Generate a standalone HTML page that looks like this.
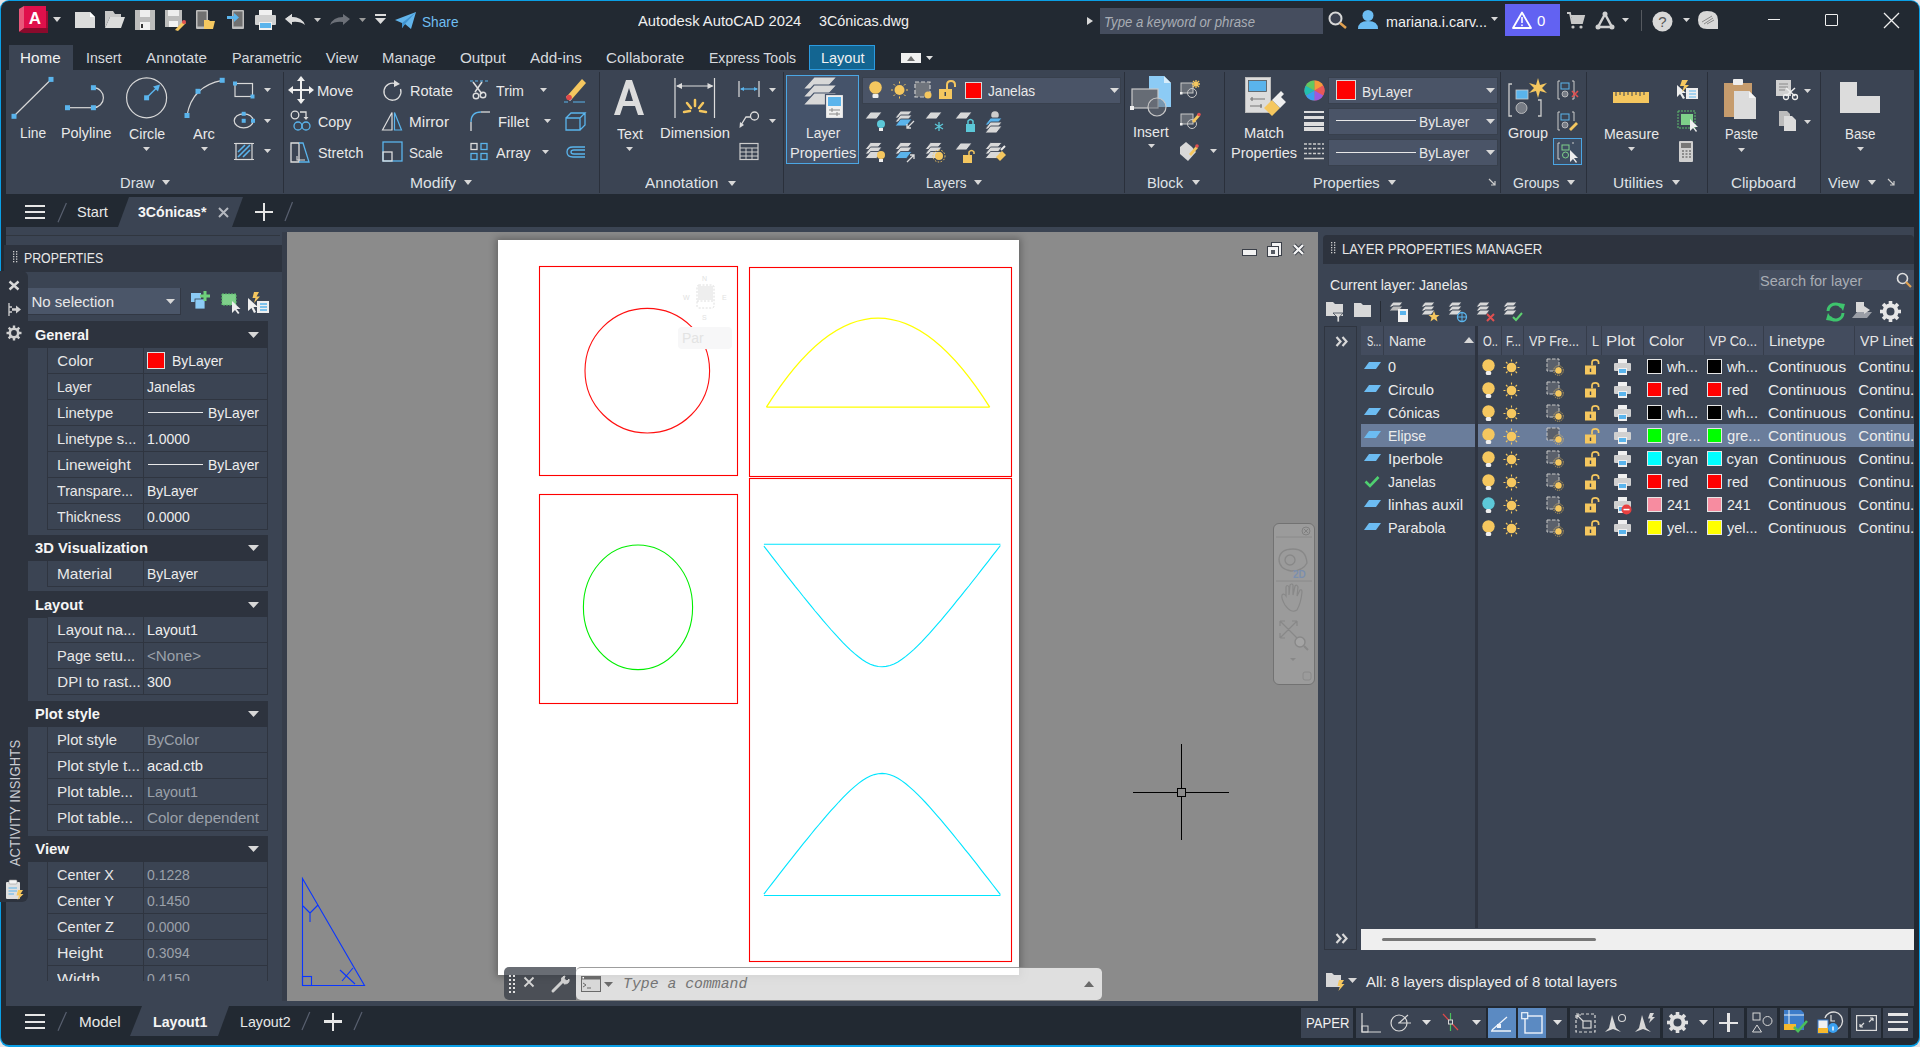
<!DOCTYPE html>
<html><head><meta charset="utf-8"><title>AutoCAD</title>
<style>
html,body{margin:0;padding:0;}
body{width:1920px;height:1047px;overflow:hidden;position:relative;background:#e8e4e6;font-family:"Liberation Sans",sans-serif;}
.a{position:absolute;box-sizing:border-box;}
.t{position:absolute;line-height:0;white-space:nowrap;font-family:"Liberation Sans",sans-serif;}
svg.a{overflow:visible;}
</style></head><body>
<div class="a" style="left:0px;top:0px;width:1920px;height:1047px;background:#0a9fe6;border-radius:9px;"></div><div class="a" style="left:1px;top:1px;width:1918px;height:1044px;background:#222932;border-radius:8px;"></div><div class="a" style="left:9px;top:45px;width:64px;height:25px;background:#3b4453;"></div><div class="a" style="left:6px;top:70px;width:1908px;height:124px;background:#3b4453;"></div><div class="a" style="left:283px;top:72px;width:1px;height:121px;background:#2a303b;"></div><div class="a" style="left:599px;top:72px;width:1px;height:121px;background:#2a303b;"></div><div class="a" style="left:783px;top:72px;width:1px;height:121px;background:#2a303b;"></div><div class="a" style="left:1124px;top:72px;width:1px;height:121px;background:#2a303b;"></div><div class="a" style="left:1224px;top:72px;width:1px;height:121px;background:#2a303b;"></div><div class="a" style="left:1500px;top:72px;width:1px;height:121px;background:#2a303b;"></div><div class="a" style="left:1586px;top:72px;width:1px;height:121px;background:#2a303b;"></div><div class="a" style="left:1707px;top:72px;width:1px;height:121px;background:#2a303b;"></div><div class="a" style="left:1820px;top:72px;width:1px;height:121px;background:#2a303b;"></div><svg class="a" style="left:110px;top:196px;" width="140" height="32" viewBox="0 0 140 32"><polygon points="8,31 19,1 133,1 122,31" fill="#3b4453"/></svg><div class="a" style="left:6px;top:227px;width:1908px;height:779px;background:#3b4453;"></div><div class="a" style="left:287px;top:232px;width:1031px;height:769px;background:#8b8b8b;"></div><svg class="a" style="left:125px;top:1005px;" width="110" height="32" viewBox="0 0 110 32"><polygon points="5,31 17,1 104,1 93,31" fill="#3b4453"/></svg><svg class="a" style="left:19px;top:6px;" width="31" height="27" viewBox="0 0 31 27"><polygon points="0,3 5,0 5,23 0,26" fill="#e9577a"/><rect x="5" y="0" width="22" height="22" fill="#e0104b"/><polygon points="5,22 27,22 29,19 29,27 5,27 0,26" fill="#8a0a2c"/><rect x="27" y="5" width="2" height="17" fill="#a30a33"/><text x="16" y="18" font-family="Liberation Sans" font-weight="bold" font-size="17" fill="#fff" text-anchor="middle">A</text></svg><svg class="a" style="left:53.0px;top:16.5px;" width="8" height="5" viewBox="0 0 8 5"><polygon points="0,0 8,0 4.0,5" fill="#d8d8d8"/></svg><svg class="a" style="left:75px;top:12px;" width="20" height="16" viewBox="0 0 20 16"><polygon points="0,0 15,0 20,5 20,16 0,16" fill="#dcdcdc"/><polygon points="15,0 15,5 20,5" fill="#fff"/></svg><svg class="a" style="left:105px;top:11px;" width="20" height="17" viewBox="0 0 20 17"><polygon points="0,0 8,0 10,3 16,3 16,6 5,6 0,17" fill="#c8c8c8"/><polygon points="5,6 20,6 16,17 0,17" fill="#dcdcdc"/></svg><svg class="a" style="left:135px;top:10px;" width="20" height="20" viewBox="0 0 20 20"><rect width="20" height="20" fill="#bdbdbd"/><rect x="5" y="0" width="10" height="7" fill="#eee"/><rect x="5" y="12" width="10" height="8" fill="#f2f2f2"/><rect x="6" y="14" width="2" height="4" fill="#333"/></svg><svg class="a" style="left:165px;top:10px;" width="20" height="20" viewBox="0 0 20 20"><rect width="17" height="17" fill="#bdbdbd"/><rect x="3" y="0" width="11" height="6" fill="#eee"/><rect x="4" y="11" width="9" height="6" fill="#f2f2f2"/><polygon points="10,20 18,11 21,13 13,21" fill="#f5c860"/><circle cx="19" cy="12" r="2" fill="#e05050"/></svg><svg class="a" style="left:196px;top:10px;" width="19" height="19" viewBox="0 0 19 19"><rect x="0" y="0" width="12" height="19" rx="1" fill="#bdbdbd"/><rect x="1.5" y="1.5" width="9" height="15" fill="#707070"/><polygon points="8,10 13,10 14,11 19,11 17,19 8,19" fill="#f5c860"/></svg><svg class="a" style="left:227px;top:10px;" width="17" height="19" viewBox="0 0 17 19"><rect x="5" y="0" width="12" height="19" rx="1" fill="#bdbdbd"/><rect x="6.5" y="1.5" width="9" height="15" fill="#707070"/><rect x="0" y="6" width="8" height="3" fill="#5ab4ec"/><polygon points="7,3 12,7.5 7,12" fill="#5ab4ec"/></svg><svg class="a" style="left:255px;top:10px;" width="21" height="20" viewBox="0 0 21 20"><rect x="4" y="0" width="13" height="6" fill="#f0f0f0"/><rect x="0" y="5" width="21" height="10" rx="1" fill="#d0d0d0"/><rect x="4" y="12" width="13" height="8" fill="#f0f0f0"/><rect x="5" y="13" width="11" height="5" fill="#5ab4ec"/></svg><svg class="a" style="left:285px;top:14px;" width="21" height="12" viewBox="0 0 21 12"><polygon points="0,5 7,0 7,3 12,3 C" fill="#ddd"/><path d="M0,5 L7,0 L7,3 Q17,3 20,11 Q15,7 7,8 L7,11 Z" fill="#dcdcdc"/></svg><svg class="a" style="left:313.5px;top:18.0px;" width="7" height="4" viewBox="0 0 7 4"><polygon points="0,0 7,0 3.5,4" fill="#c8c8c8"/></svg><svg class="a" style="left:330px;top:14px;" width="20" height="12" viewBox="0 0 20 12"><path d="M20,5 L13,0 L13,3 Q3,3 0,11 Q5,7 13,8 L13,11 Z" fill="#6c7078"/></svg><svg class="a" style="left:358.5px;top:18.0px;" width="7" height="4" viewBox="0 0 7 4"><polygon points="0,0 7,0 3.5,4" fill="#9a9a9a"/></svg><svg class="a" style="left:375px;top:14px;" width="11" height="11" viewBox="0 0 11 11"><rect x="0" y="0" width="11" height="2" fill="#dcdcdc"/><polygon points="0,4 11,4 5.5,10" fill="#dcdcdc"/></svg><svg class="a" style="left:395px;top:12px;" width="21" height="17" viewBox="0 0 21 17"><polygon points="0,8 21,0 16,17 10,12 7,16 7,11" fill="#62b5ec"/><polygon points="7,11 21,0 10,12 7,16" fill="#3f93d0"/></svg><div class="t" style="left:421.50px;top:22.00px;font-size:15px;color:#70bff2;transform:scaleX(0.9119);transform-origin:0 0;">Share</div><div class="t" style="left:638.40px;top:20.80px;font-size:15px;color:#f0f0f0;transform:scaleX(0.9841);transform-origin:0 0;">Autodesk AutoCAD 2024</div><div class="t" style="left:818.50px;top:20.80px;font-size:15px;color:#f0f0f0;transform:scaleX(0.9552);transform-origin:0 0;">3Cónicas.dwg</div><svg class="a" style="left:1087px;top:17px;" width="6" height="8" viewBox="0 0 6 8"><polygon points="0,0 6,4 0,8" fill="#d8d8d8"/></svg><div class="a" style="left:1100px;top:8px;width:223px;height:26px;background:#454d5e;"></div><div class="t" style="left:1103.50px;top:21.50px;font-size:15px;color:#a9adb5;font-style:italic;transform:scaleX(0.8764);transform-origin:0 0;">Type a keyword or phrase</div><svg class="a" style="left:1328px;top:11px;" width="20" height="18" viewBox="0 0 20 18"><circle cx="7.5" cy="7.5" r="6" fill="#3b4150" stroke="#d8d8d8" stroke-width="2"/><line x1="12" y1="12" x2="18" y2="17" stroke="#e0a050" stroke-width="2.5"/></svg><svg class="a" style="left:1358px;top:10px;" width="20" height="19" viewBox="0 0 20 19"><circle cx="10" cy="5.5" r="5.5" fill="#6cbcf2"/><path d="M0,19 Q0,11 10,11 Q20,11 20,19 Z" fill="#6cbcf2"/></svg><div class="t" style="left:1386.00px;top:22.00px;font-size:15px;color:#f0f0f0;transform:scaleX(0.9566);transform-origin:0 0;">mariana.i.carv...</div><svg class="a" style="left:1490.5px;top:17.0px;" width="7" height="4" viewBox="0 0 7 4"><polygon points="0,0 7,0 3.5,4" fill="#d8d8d8"/></svg><div class="a" style="left:1505px;top:4px;width:55px;height:32px;background:#6262f2;"></div><svg class="a" style="left:1512px;top:11px;" width="20" height="18" viewBox="0 0 20 18"><path d="M10,1.5 L19,17 L1,17 Z" fill="none" stroke="#fff" stroke-width="1.8" stroke-linejoin="round"/><rect x="9.2" y="6" width="1.6" height="6" fill="#fff"/><rect x="9.2" y="13.5" width="1.6" height="1.6" fill="#fff"/></svg><div class="t" style="left:1537.00px;top:20.50px;font-size:15px;color:#fff;">0</div><svg class="a" style="left:1567px;top:12px;" width="17" height="17" viewBox="0 0 17 17"><path d="M0,1 L3,1 L5,11 L15,11 L17,4 L4,4" fill="none" stroke="#c8c8c8" stroke-width="1.8"/><rect x="5" y="5" width="11" height="5" fill="#c8c8c8"/><circle cx="6" cy="15" r="1.6" fill="#c8c8c8"/><circle cx="14" cy="15" r="1.6" fill="#c8c8c8"/></svg><svg class="a" style="left:1595px;top:11px;" width="20" height="19" viewBox="0 0 20 19"><path d="M10,3 L17,16 L3,16 Z" fill="none" stroke="#d0d0d0" stroke-width="2.5" stroke-linejoin="round"/><circle cx="10" cy="3" r="2.5" fill="#d0d0d0"/><circle cx="3" cy="16" r="2.5" fill="#d0d0d0"/><circle cx="17" cy="16" r="2.5" fill="#d0d0d0"/></svg><svg class="a" style="left:1621.5px;top:18.0px;" width="7" height="4" viewBox="0 0 7 4"><polygon points="0,0 7,0 3.5,4" fill="#d8d8d8"/></svg><div class="a" style="left:1641px;top:10px;width:1px;height:21px;background:#55595f;"></div><svg class="a" style="left:1652px;top:11px;" width="21" height="21" viewBox="0 0 21 21"><circle cx="10.5" cy="10.5" r="10" fill="#d8d8d8"/><text x="10.5" y="16" font-family="Liberation Sans" font-size="15" fill="#555" text-anchor="middle">?</text></svg><svg class="a" style="left:1682.5px;top:18.0px;" width="7" height="4" viewBox="0 0 7 4"><polygon points="0,0 7,0 3.5,4" fill="#d8d8d8"/></svg><svg class="a" style="left:1698px;top:11px;" width="20" height="18" viewBox="0 0 20 18"><path d="M9,0 Q20,0 20,9 L20,18 L9,18 Q0,18 0,9 Q0,0 9,0 Z" fill="#d8d8d8"/><path d="M4,11 L14,5 M6,13 L15,7 M9,13 L16,9" stroke="#888" stroke-width="1"/></svg><div class="a" style="left:1768px;top:19px;width:12px;height:1px;background:#f0f0f0;"></div><div class="a" style="left:1825px;top:14px;width:13px;height:12px;border:1.3px solid #f0f0f0;border-radius:1px;"></div><svg class="a" style="left:1883px;top:12px;" width="17" height="17" viewBox="0 0 17 17"><path d="M1,1 L16,16 M16,1 L1,16" stroke="#f0f0f0" stroke-width="1.3"/></svg><div class="t" style="left:20.30px;top:58.30px;font-size:15px;color:#f2f2f2;transform:scaleX(1.0147);transform-origin:0 0;">Home</div><div class="t" style="left:86.40px;top:58.30px;font-size:15px;color:#d6d9de;transform:scaleX(0.9463);transform-origin:0 0;">Insert</div><div class="t" style="left:146.00px;top:58.30px;font-size:15px;color:#d6d9de;transform:scaleX(1.0158);transform-origin:0 0;">Annotate</div><div class="t" style="left:232.40px;top:58.30px;font-size:15px;color:#d6d9de;transform:scaleX(0.9598);transform-origin:0 0;">Parametric</div><div class="t" style="left:325.80px;top:58.30px;font-size:15px;color:#d6d9de;">View</div><div class="t" style="left:382.00px;top:58.30px;font-size:15px;color:#d6d9de;transform:scaleX(0.9925);transform-origin:0 0;">Manage</div><div class="t" style="left:460.00px;top:58.30px;font-size:15px;color:#d6d9de;transform:scaleX(1.0171);transform-origin:0 0;">Output</div><div class="t" style="left:530.00px;top:58.30px;font-size:15px;color:#d6d9de;transform:scaleX(1.0224);transform-origin:0 0;">Add-ins</div><div class="t" style="left:605.70px;top:58.30px;font-size:15px;color:#d6d9de;transform:scaleX(1.0194);transform-origin:0 0;">Collaborate</div><div class="t" style="left:708.60px;top:58.30px;font-size:15px;color:#d6d9de;transform:scaleX(0.9356);transform-origin:0 0;">Express Tools</div><div class="a" style="left:809px;top:45px;width:66px;height:25px;background:#136591;border:1px solid #2b9be0;"></div><div class="t" style="left:820.50px;top:58.30px;font-size:15px;color:#f2f2f2;transform:scaleX(0.9659);transform-origin:0 0;">Layout</div><svg class="a" style="left:901px;top:53px;" width="20" height="10" viewBox="0 0 20 10"><rect width="20" height="10" fill="#f0f0f0"/><polygon points="6,8 14,8 10,3" fill="#707070"/></svg><svg class="a" style="left:925.5px;top:56.0px;" width="7" height="4" viewBox="0 0 7 4"><polygon points="0,0 7,0 3.5,4" fill="#e0e0e0"/></svg><svg class="a" style="left:0px;top:70px;" width="290" height="100" viewBox="0 0 290 100"><line x1="14" y1="46" x2="51" y2="9.5" stroke="#d8d8d8" stroke-width="1.2"/><rect x="11.5" y="43.8" width="5" height="5" fill="#5ab4ec"/><rect x="48.5" y="6.9" width="5" height="5" fill="#5ab4ec"/><line x1="67.5" y1="37.7" x2="93.4" y2="37.7" stroke="#d8d8d8" stroke-width="1.2"/><path d="M93.4,17.7 A10,10 0 0 1 93.4,37.7" fill="none" stroke="#d8d8d8" stroke-width="1.2"/><rect x="65.0" y="35.2" width="5" height="5" fill="#5ab4ec"/><rect x="90.9" y="35.2" width="5" height="5" fill="#5ab4ec"/><rect x="90.9" y="15.2" width="5" height="5" fill="#5ab4ec"/><circle cx="146.6" cy="27.8" r="20" fill="none" stroke="#d8d8d8" stroke-width="1.2"/><line x1="146.6" y1="27.8" x2="157" y2="17.5" stroke="#5ab4ec" stroke-width="1.5"/><polygon points="160,14.5 153,16.5 158,21.5" fill="#5ab4ec"/><rect x="144.1" y="25.3" width="5" height="5" fill="#5ab4ec"/><path d="M187,45.5 Q192,16 222.2,10.3" fill="none" stroke="#d8d8d8" stroke-width="1.2"/><rect x="184.5" y="43.0" width="5" height="5" fill="#5ab4ec"/><rect x="195.5" y="18.8" width="5" height="5" fill="#5ab4ec"/><rect x="219.7" y="7.800000000000001" width="5" height="5" fill="#5ab4ec"/><rect x="235" y="13.5" width="17.5" height="13" fill="none" stroke="#d8d8d8" stroke-width="1.2"/><rect x="233.0" y="11.5" width="4" height="4" fill="#5ab4ec"/><rect x="250.5" y="24.5" width="4" height="4" fill="#5ab4ec"/><ellipse cx="243.7" cy="50.8" rx="9.5" ry="7" fill="none" stroke="#d8d8d8" stroke-width="1.2"/><rect x="241.7" y="48.8" width="4" height="4" fill="#5ab4ec"/><rect x="241.7" y="41.8" width="4" height="4" fill="#5ab4ec"/><rect x="251.0" y="48.8" width="4" height="4" fill="#5ab4ec"/><rect x="236" y="73.5" width="16" height="16" fill="none" stroke="#d8d8d8" stroke-width="1.2"/><path d="M238,87 L250,75 M238,82 L245,75 M243,87 L250,80" stroke="#5ab4ec" stroke-width="1.6"/><path d="M234,73.5 L254,73.5 M234,89.5 L254,89.5" stroke="#d8d8d8" stroke-width="1"/></svg><div class="t" style="left:19.50px;top:133.00px;font-size:15px;color:#e9e9e9;transform:scaleX(0.9203);transform-origin:0 0;">Line</div><div class="t" style="left:60.60px;top:133.00px;font-size:15px;color:#e9e9e9;transform:scaleX(0.9595);transform-origin:0 0;">Polyline</div><div class="t" style="left:129.40px;top:133.50px;font-size:15px;color:#e9e9e9;transform:scaleX(0.9443);transform-origin:0 0;">Circle</div><div class="t" style="left:193.30px;top:133.50px;font-size:15px;color:#e9e9e9;transform:scaleX(0.9733);transform-origin:0 0;">Arc</div><svg class="a" style="left:143.0px;top:146.6px;" width="7" height="4" viewBox="0 0 7 4"><polygon points="0,0 7,0 3.5,4" fill="#d8d8d8"/></svg><svg class="a" style="left:200.5px;top:146.6px;" width="7" height="4" viewBox="0 0 7 4"><polygon points="0,0 7,0 3.5,4" fill="#d8d8d8"/></svg><svg class="a" style="left:263.5px;top:87.7px;" width="7" height="4" viewBox="0 0 7 4"><polygon points="0,0 7,0 3.5,4" fill="#d8d8d8"/></svg><svg class="a" style="left:263.5px;top:118.5px;" width="7" height="4" viewBox="0 0 7 4"><polygon points="0,0 7,0 3.5,4" fill="#d8d8d8"/></svg><svg class="a" style="left:263.5px;top:149.3px;" width="7" height="4" viewBox="0 0 7 4"><polygon points="0,0 7,0 3.5,4" fill="#d8d8d8"/></svg><div class="t" style="left:119.50px;top:182.60px;font-size:15px;color:#dfe2e6;transform:scaleX(0.9828);transform-origin:0 0;">Draw</div><svg class="a" style="left:162.0px;top:180.0px;" width="8" height="5" viewBox="0 0 8 5"><polygon points="0,0 8,0 4.0,5" fill="#d8d8d8"/></svg><svg class="a" style="left:288px;top:76px;" width="300" height="90" viewBox="0 0 300 90"><path d="M13,4 L13,24 M3,14 L23,14" stroke="#eee" stroke-width="2"/><polygon points="13,0 9,5 17,5" fill="#eee"/><polygon points="13,28 9,23 17,23" fill="#eee"/><polygon points="0,14 5,10 5,18" fill="#eee"/><polygon points="26,14 21,10 21,18" fill="#eee"/><circle cx="7" cy="39" r="3.8" fill="none" stroke="#ddd" stroke-width="1.3"/><path d="M12,36 L18,36 L18,42" fill="none" stroke="#ddd" stroke-width="1.3"/><polygon points="15.5,41 20.5,41 18,44" fill="#ddd"/><circle cx="10" cy="50" r="4" fill="none" stroke="#5ab4ec" stroke-width="1.3"/><circle cx="18" cy="50" r="4" fill="none" stroke="#5ab4ec" stroke-width="1.3"/><path d="M3,67 L11,67 L11,86 L3,86 Z" fill="none" stroke="#ddd" stroke-width="1.3"/><path d="M11,67 L15,67 L21,86 L11,86" fill="none" stroke="#5ab4ec" stroke-width="1.3"/><path d="M9,80 L9,84 L17,84" fill="none" stroke="#ddd" stroke-width="1.1"/><path d="M108,8 A8.5,8.5 0 1 0 112.5,13" fill="none" stroke="#ddd" stroke-width="1.3"/><polygon points="106,4 112,8 106,11" fill="#ddd"/><polygon points="94.5,54 104,36.5 104,54" fill="none" stroke="#ddd" stroke-width="1.2"/><polygon points="106.5,36.5 106.5,54 113.5,54" fill="none" stroke="#5ab4ec" stroke-width="1.2"/><rect x="95" y="66" width="19" height="19" fill="none" stroke="#5ab4ec" stroke-width="1.3"/><rect x="95" y="76" width="9" height="9" fill="none" stroke="#ddd" stroke-width="1.3"/><path d="M182,5 L200,5" stroke="#5ab4ec" stroke-width="1.2" stroke-dasharray="3,2"/><path d="M185,6 L194,18 M194,6 L187,16" stroke="#ddd" stroke-width="1.5"/><circle cx="188" cy="20" r="2.8" fill="none" stroke="#ddd" stroke-width="1.4"/><circle cx="195" cy="19" r="2.8" fill="none" stroke="#ddd" stroke-width="1.4"/><path d="M183,55 L183,46" stroke="#ddd" stroke-width="1.3"/><path d="M183,46 Q183,36 193,36" fill="none" stroke="#5ab4ec" stroke-width="1.3"/><path d="M193,36 L202,36" stroke="#ddd" stroke-width="1.3"/><rect x="183" y="67.5" width="6" height="6" fill="none" stroke="#ddd" stroke-width="1.3"/><rect x="193" y="67.5" width="6" height="6" fill="none" stroke="#5ab4ec" stroke-width="1.3"/><rect x="183" y="77.5" width="6" height="6" fill="none" stroke="#5ab4ec" stroke-width="1.3"/><rect x="193" y="77.5" width="6" height="6" fill="none" stroke="#5ab4ec" stroke-width="1.3"/><polygon points="280,19 294,3 298,7 284,23" fill="#f5c75f"/><polygon points="280,19 284,23 282,25 278,21" fill="#f0f0f0"/><circle cx="281" cy="21.5" r="2.8" fill="#e04848"/><path d="M276,26 L280,26 M285,26 L297,26" stroke="#5ab4ec" stroke-width="1.2"/><path d="M278,42 L292,42 L292,54 L278,54 Z M278,42 L283,37 L297,37 L292,42 M297,37 L297,49 L292,54" fill="none" stroke="#5ab4ec" stroke-width="1.3"/><path d="M297,71 L285,71 Q279,71 279,76 Q279,81 285,81 L297,81 M297,74 L286,74 Q283,74 283,76 Q283,78 286,78 L297,78" fill="none" stroke="#5ab4ec" stroke-width="1.3"/></svg><div class="t" style="left:317.00px;top:90.50px;font-size:15px;color:#e9e9e9;transform:scaleX(0.9896);transform-origin:0 0;">Move</div><div class="t" style="left:318.30px;top:121.50px;font-size:15px;color:#e9e9e9;transform:scaleX(0.9538);transform-origin:0 0;">Copy</div><div class="t" style="left:318.30px;top:153.00px;font-size:15px;color:#e9e9e9;transform:scaleX(0.9554);transform-origin:0 0;">Stretch</div><div class="t" style="left:409.70px;top:90.50px;font-size:15px;color:#e9e9e9;transform:scaleX(0.9685);transform-origin:0 0;">Rotate</div><div class="t" style="left:408.70px;top:121.50px;font-size:15px;color:#e9e9e9;transform:scaleX(1.0215);transform-origin:0 0;">Mirror</div><div class="t" style="left:408.70px;top:153.00px;font-size:15px;color:#e9e9e9;transform:scaleX(0.9008);transform-origin:0 0;">Scale</div><div class="t" style="left:496.30px;top:90.50px;font-size:15px;color:#e9e9e9;transform:scaleX(0.9480);transform-origin:0 0;">Trim</div><div class="t" style="left:497.50px;top:121.50px;font-size:15px;color:#e9e9e9;transform:scaleX(0.9851);transform-origin:0 0;">Fillet</div><div class="t" style="left:496.30px;top:153.00px;font-size:15px;color:#e9e9e9;transform:scaleX(0.9627);transform-origin:0 0;">Array</div><svg class="a" style="left:539.5px;top:87.7px;" width="7" height="4" viewBox="0 0 7 4"><polygon points="0,0 7,0 3.5,4" fill="#d8d8d8"/></svg><svg class="a" style="left:543.5px;top:119.0px;" width="7" height="4" viewBox="0 0 7 4"><polygon points="0,0 7,0 3.5,4" fill="#d8d8d8"/></svg><svg class="a" style="left:541.5px;top:150.0px;" width="7" height="4" viewBox="0 0 7 4"><polygon points="0,0 7,0 3.5,4" fill="#d8d8d8"/></svg><div class="t" style="left:409.70px;top:182.90px;font-size:15px;color:#dfe2e6;transform:scaleX(1.0435);transform-origin:0 0;">Modify</div><svg class="a" style="left:464.0px;top:180.0px;" width="8" height="5" viewBox="0 0 8 5"><polygon points="0,0 8,0 4.0,5" fill="#d8d8d8"/></svg><svg class="a" style="left:610px;top:76px;" width="170" height="90" viewBox="0 0 170 90"><path d="M4,39 L16,4 L22,4 L34,39 L28,39 L25,30 L13,30 L10,39 Z M15,25 L23,25 L19,12 Z" fill="#dcdcdc" fill-rule="evenodd"/><path d="M65,2 L65,42 M104.5,2 L104.5,42" stroke="#ddd" stroke-width="1.2"/><path d="M67,10 L102.5,10" stroke="#ddd" stroke-width="1.2"/><polygon points="66,10 72,7 72,13" fill="#ddd"/><polygon points="103.5,10 97.5,7 97.5,13" fill="#ddd"/><path d="M85,24 L85,30 M77,27 L81,32 M93,27 L89,32 M74,36 L80,35 M96,36 L90,35" stroke="#f5c75f" stroke-width="2.5" stroke-linecap="round"/><path d="M129,5 L129,21 M149,5 L149,21" stroke="#ddd" stroke-width="1.2"/><path d="M131,13 L147,13" stroke="#5ab4ec" stroke-width="1.2"/><polygon points="130,13 134,11 134,15" fill="#5ab4ec"/><polygon points="148,13 144,11 144,15" fill="#5ab4ec"/><circle cx="144.5" cy="40" r="4" fill="none" stroke="#ddd" stroke-width="1.3"/><path d="M140.5,41 L136,41 L131,49" fill="none" stroke="#ddd" stroke-width="1.3"/><polygon points="129.5,52 130,46 134,49" fill="#ddd"/><rect x="130" y="67.5" width="18" height="16" fill="none" stroke="#ccc" stroke-width="1.2"/><path d="M130,72 L148,72 M130,76 L148,76 M130,80 L148,80 M136,72 L136,83.5 M142,72 L142,83.5" stroke="#ccc" stroke-width="1"/></svg><div class="t" style="left:617.20px;top:133.50px;font-size:15px;color:#e9e9e9;transform:scaleX(0.9415);transform-origin:0 0;">Text</div><svg class="a" style="left:625.8px;top:146.5px;" width="7" height="4" viewBox="0 0 7 4"><polygon points="0,0 7,0 3.5,4" fill="#d8d8d8"/></svg><div class="t" style="left:659.90px;top:133.00px;font-size:15px;color:#e9e9e9;transform:scaleX(0.9878);transform-origin:0 0;">Dimension</div><svg class="a" style="left:768.7px;top:87.9px;" width="7" height="4" viewBox="0 0 7 4"><polygon points="0,0 7,0 3.5,4" fill="#d8d8d8"/></svg><svg class="a" style="left:768.7px;top:118.5px;" width="7" height="4" viewBox="0 0 7 4"><polygon points="0,0 7,0 3.5,4" fill="#d8d8d8"/></svg><div class="t" style="left:645.30px;top:182.80px;font-size:15px;color:#dfe2e6;transform:scaleX(1.0234);transform-origin:0 0;">Annotation</div><svg class="a" style="left:728.1px;top:180.5px;" width="8" height="5" viewBox="0 0 8 5"><polygon points="0,0 8,0 4.0,5" fill="#d8d8d8"/></svg><div class="a" style="left:786px;top:75px;width:73px;height:89px;background:#45536a;border:1.3px solid #4ba6e4;"></div><svg class="a" style="left:803px;top:77px;" width="46" height="42" viewBox="0 0 46 42"><polygon points="0,12 11,0 34,0 23,12" fill="#d8d8d8" stroke="#45536a" stroke-width="1.2"/><polygon points="0,20 11,8 34,8 23,20" fill="#d8d8d8" stroke="#45536a" stroke-width="1.2"/><polygon points="0,28 11,16 34,16 23,28" fill="#d8d8d8" stroke="#45536a" stroke-width="1.2"/><rect x="22.5" y="17.5" width="18" height="24" fill="#f0f0f0" stroke="#45536a" stroke-width="1.2"/><rect x="25" y="20" width="13" height="9" fill="#5ab4ec"/><path d="M26,33 L37,33 M26,37 L37,37 M29,31 L29,35 M34,35 L34,39" stroke="#888" stroke-width="1"/></svg><div class="t" style="left:805.70px;top:133.30px;font-size:15px;color:#e9e9e9;transform:scaleX(0.9141);transform-origin:0 0;">Layer</div><div class="t" style="left:789.70px;top:152.50px;font-size:15px;color:#e9e9e9;transform:scaleX(0.9698);transform-origin:0 0;">Properties</div><div class="a" style="left:862px;top:77px;width:259px;height:27px;background:#4a5467;border:1px solid #38404d;"></div><svg class="a" style="left:869px;top:81px;" width="14" height="18" viewBox="0 0 14 18"><circle cx="6.5" cy="6.5" r="6.3" fill="#f5c75f"/><rect x="3.5" y="13" width="6" height="4" rx="1" fill="#eee"/></svg><svg class="a" style="left:890px;top:81px;" width="19" height="18" viewBox="0 0 19 18"><circle cx="9.5" cy="9" r="5" fill="#f5c75f"/><path d="M9.5,0.5 L9.5,2.5 M9.5,15.5 L9.5,17.5 M1,9 L3,9 M16,9 L18,9 M3.5,3 L5,4.5 M14,13.5 L15.5,15 M3.5,15 L5,13.5 M14,4.5 L15.5,3" stroke="#f5c75f" stroke-width="1"/></svg><svg class="a" style="left:914px;top:81px;" width="20" height="18" viewBox="0 0 20 18"><rect x="1" y="1" width="15" height="15" fill="#6f747c" stroke="#ccc" stroke-width="1.2" stroke-dasharray="4,2"/><circle cx="14" cy="14" r="3.5" fill="#f5c75f"/></svg><svg class="a" style="left:939px;top:81px;" width="18" height="18" viewBox="0 0 18 18"><rect x="0" y="8" width="13" height="10" fill="#f5c75f"/><path d="M8,8 L8,4 Q8,0 12,0 Q16,0 16,4 L16,6" fill="none" stroke="#f5c75f" stroke-width="2"/><rect x="5.5" y="11" width="1.5" height="4" fill="#3b4453"/></svg><div class="a" style="left:965px;top:82px;width:17px;height:17px;background:#ff0000;border:1px solid #d8d8d8;"></div><div class="t" style="left:988.00px;top:90.50px;font-size:15px;color:#e9e9e9;transform:scaleX(0.9110);transform-origin:0 0;">Janelas</div><svg class="a" style="left:1109.5px;top:87.7px;" width="9" height="5" viewBox="0 0 9 5"><polygon points="0,0 9,0 4.5,5" fill="#dcdcdc"/></svg><svg class="a" style="left:865px;top:111px;" width="21" height="21" viewBox="0 0 21 21"><polygon points="0,8 5.5,1 17,1 11.5,8" fill="#d8d8d8" stroke="#3b4453" stroke-width="0.9"/><circle cx="16" cy="13" r="4" fill="#5cc8d8"/><rect x="14" y="17" width="4" height="3" fill="#eee"/></svg><svg class="a" style="left:895px;top:111px;" width="20" height="21" viewBox="0 0 20 21"><polygon points="0,7 5.5,0 17,0 11.5,7" fill="#d8d8d8" stroke="#3b4453" stroke-width="0.9"/><polygon points="0,11 5.5,4 17,4 11.5,11" fill="#d8d8d8" stroke="#3b4453" stroke-width="0.9"/><polygon points="0,15 5.5,8 17,8 11.5,15" fill="#5ab4ec" stroke="#3b4453" stroke-width="0.9"/><path d="M19,10 L12,17 M12,13 L12,17 L16,17" fill="none" stroke="#ddd" stroke-width="1.3"/></svg><svg class="a" style="left:925px;top:111px;" width="20" height="21" viewBox="0 0 20 21"><polygon points="0,8 5.5,1 17,1 11.5,8" fill="#d8d8d8" stroke="#3b4453" stroke-width="0.9"/><path d="M14,11 L14,20 M10,13 L18,18 M10,18 L18,13" stroke="#5cc8d8" stroke-width="1.3"/></svg><svg class="a" style="left:955px;top:111px;" width="21" height="21" viewBox="0 0 21 21"><polygon points="0,8 5.5,1 17,1 11.5,8" fill="#d8d8d8" stroke="#3b4453" stroke-width="0.9"/><rect x="11" y="13" width="9" height="8" fill="#5cc8d8"/><path d="M13,13 L13,10 Q15.5,7 18,10 L18,13" fill="none" stroke="#5cc8d8" stroke-width="1.5"/></svg><svg class="a" style="left:985px;top:111px;" width="21" height="21" viewBox="0 0 21 21"><circle cx="10" cy="4" r="3.8" fill="#ccc"/><polygon points="0,14 5.5,7 17,7 11.5,14" fill="#5ab4ec" stroke="#3b4453" stroke-width="0.9"/><polygon points="0,18 5.5,11 17,11 11.5,18" fill="#d8d8d8" stroke="#3b4453" stroke-width="0.9"/><polygon points="0,22 5.5,15 17,15 11.5,22" fill="#d8d8d8" stroke="#3b4453" stroke-width="0.9"/></svg><svg class="a" style="left:865px;top:142px;" width="21" height="21" viewBox="0 0 21 21"><polygon points="0,7.5 5.5,0.5 17,0.5 11.5,7.5" fill="#d8d8d8" stroke="#3b4453" stroke-width="0.9"/><polygon points="0,12 5.5,5 17,5 11.5,12" fill="#d8d8d8" stroke="#3b4453" stroke-width="0.9"/><polygon points="0,16.5 5.5,9.5 17,9.5 11.5,16.5" fill="#d8d8d8" stroke="#3b4453" stroke-width="0.9"/><circle cx="16" cy="13" r="4" fill="#f5c75f"/><rect x="14" y="17" width="4" height="3" fill="#eee"/></svg><svg class="a" style="left:895px;top:142px;" width="20" height="21" viewBox="0 0 20 21"><polygon points="0,7.5 5.5,0.5 17,0.5 11.5,7.5" fill="#d8d8d8" stroke="#3b4453" stroke-width="0.9"/><polygon points="0,12 5.5,5 17,5 11.5,12" fill="#d8d8d8" stroke="#3b4453" stroke-width="0.9"/><polygon points="0,16.5 5.5,9.5 17,9.5 11.5,16.5" fill="#5ab4ec" stroke="#3b4453" stroke-width="0.9"/><path d="M12,20 L19,13 M15,13 L19,13 L19,17" fill="none" stroke="#ddd" stroke-width="1.3"/></svg><svg class="a" style="left:925px;top:142px;" width="21" height="21" viewBox="0 0 21 21"><polygon points="0,7.5 5.5,0.5 17,0.5 11.5,7.5" fill="#d8d8d8" stroke="#3b4453" stroke-width="0.9"/><polygon points="0,12 5.5,5 17,5 11.5,12" fill="#d8d8d8" stroke="#3b4453" stroke-width="0.9"/><polygon points="0,16.5 5.5,9.5 17,9.5 11.5,16.5" fill="#d8d8d8" stroke="#3b4453" stroke-width="0.9"/><circle cx="14" cy="14" r="4" fill="#f5c75f"/><circle cx="14" cy="14" r="6" fill="none" stroke="#f5c75f" stroke-width="1" stroke-dasharray="1.5,1.5"/></svg><svg class="a" style="left:955px;top:142px;" width="21" height="21" viewBox="0 0 21 21"><polygon points="0,8 5.5,1 17,1 11.5,8" fill="#d8d8d8" stroke="#3b4453" stroke-width="0.9"/><rect x="8" y="13" width="9" height="8" fill="#f5c75f"/><path d="M14,13 L14,10 Q16.5,7 19,10 L19,12" fill="none" stroke="#f5c75f" stroke-width="1.5"/></svg><svg class="a" style="left:985px;top:142px;" width="21" height="21" viewBox="0 0 21 21"><polygon points="0,7.5 5.5,0.5 17,0.5 11.5,7.5" fill="#d8d8d8" stroke="#3b4453" stroke-width="0.9"/><polygon points="0,12 5.5,5 17,5 11.5,12" fill="#d8d8d8" stroke="#3b4453" stroke-width="0.9"/><polygon points="0,16.5 5.5,9.5 17,9.5 11.5,16.5" fill="#d8d8d8" stroke="#3b4453" stroke-width="0.9"/><polygon points="11,15 17,9 21,13 15,19" fill="#f5c75f"/><path d="M16,8 L20,4" stroke="#eee" stroke-width="2"/></svg><div class="t" style="left:925.70px;top:182.50px;font-size:15px;color:#dfe2e6;transform:scaleX(0.8973);transform-origin:0 0;">Layers</div><svg class="a" style="left:974.2px;top:180.0px;" width="8" height="5" viewBox="0 0 8 5"><polygon points="0,0 8,0 4.0,5" fill="#d8d8d8"/></svg><svg class="a" style="left:1130px;top:75px;" width="44" height="44" viewBox="0 0 44 44"><polygon points="19,1 34,1 41,8 41,32 19,32" fill="#8ccbf5"/><polygon points="34,1 34,8 41,8" fill="#d6ecfa"/><rect x="2" y="14" width="26" height="19" fill="#666c75" stroke="#c8c8c8" stroke-width="1.2"/><circle cx="27" cy="32" r="9" fill="#666c75" fill-opacity="0.55" stroke="#c8c8c8" stroke-width="1.2"/><rect x="0" y="31" width="4" height="4" fill="#eee"/></svg><div class="t" style="left:1133.20px;top:132.00px;font-size:15px;color:#e9e9e9;transform:scaleX(0.9490);transform-origin:0 0;">Insert</div><svg class="a" style="left:1147.5px;top:144.2px;" width="7" height="4" viewBox="0 0 7 4"><polygon points="0,0 7,0 3.5,4" fill="#d8d8d8"/></svg><svg class="a" style="left:1180px;top:80px;" width="20" height="20" viewBox="0 0 20 20"><rect x="1" y="3" width="12" height="10" fill="#666c75" stroke="#c8c8c8" stroke-width="1"/><circle cx="12" cy="13" r="4.5" fill="none" stroke="#c8c8c8" stroke-width="1"/><rect x="0" y="12" width="2.5" height="2.5" fill="#eee"/><path d="M16,0 L16,8 M12,4 L20,4 M13,1 L19,7 M19,1 L13,7" stroke="#f5c75f" stroke-width="1.3"/></svg><svg class="a" style="left:1180px;top:111px;" width="20" height="20" viewBox="0 0 20 20"><rect x="1" y="3" width="12" height="10" fill="#666c75" stroke="#c8c8c8" stroke-width="1"/><circle cx="12" cy="13" r="4.5" fill="none" stroke="#c8c8c8" stroke-width="1"/><rect x="0" y="12" width="2.5" height="2.5" fill="#eee"/><polygon points="12,10 18,3 20,5 14,12" fill="#f5c75f"/><circle cx="19" cy="3.5" r="1.8" fill="#e05050"/></svg><svg class="a" style="left:1180px;top:142px;" width="20" height="20" viewBox="0 0 20 20"><polygon points="0,5 6,0 12,5 16,10 8,19 0,12" fill="#d8d8d8"/><polygon points="9,12 16,4 18,6 11,14" fill="#f5c75f"/><circle cx="17" cy="4" r="1.8" fill="#e05050"/></svg><svg class="a" style="left:1209.5px;top:149.3px;" width="7" height="4" viewBox="0 0 7 4"><polygon points="0,0 7,0 3.5,4" fill="#d8d8d8"/></svg><div class="t" style="left:1147.40px;top:182.80px;font-size:15px;color:#dfe2e6;transform:scaleX(0.9815);transform-origin:0 0;">Block</div><svg class="a" style="left:1192.2px;top:180.0px;" width="8" height="5" viewBox="0 0 8 5"><polygon points="0,0 8,0 4.0,5" fill="#d8d8d8"/></svg><svg class="a" style="left:1245px;top:77px;" width="42" height="44" viewBox="0 0 42 44"><rect x="0.5" y="0.5" width="25" height="35" fill="#dcdcdc" stroke="#bbb" stroke-width="1"/><rect x="3.5" y="3.5" width="18" height="11" fill="#5ab4ec" stroke="#555" stroke-width="0.8"/><path d="M5,22 L20,22 M5,29 L17,29 M7,20 L7,24 M16,27 L16,31" stroke="#777" stroke-width="1.2"/><polygon points="19,31 27,23 35,31 27,39" fill="#f5c75f"/><polygon points="27,23 33,17 36,14 39,17 36,20 41,25 35,31" fill="#eeeeee"/></svg><div class="t" style="left:1243.50px;top:132.70px;font-size:15px;color:#e9e9e9;transform:scaleX(0.9793);transform-origin:0 0;">Match</div><div class="t" style="left:1230.70px;top:152.50px;font-size:15px;color:#e9e9e9;transform:scaleX(0.9654);transform-origin:0 0;">Properties</div><svg class="a" style="left:1304px;top:80px;" width="21" height="21" viewBox="0 0 21 21"><circle cx="10.5" cy="10.5" r="10" fill="#e05a5a"/><path d="M10.5,10.5 L10.5,0.5 A10,10 0 0 1 19.2,5.5 Z" fill="#f59a3a"/><path d="M10.5,10.5 L19.2,5.5 A10,10 0 0 1 19.2,15.5 Z" fill="#e85858"/><path d="M10.5,10.5 L19.2,15.5 A10,10 0 0 1 10.5,20.5 Z" fill="#9a5ae0"/><path d="M10.5,10.5 L10.5,20.5 A10,10 0 0 1 1.8,15.5 Z" fill="#3aa0f0"/><path d="M10.5,10.5 L1.8,15.5 A10,10 0 0 1 1.8,5.5 Z" fill="#20c0b0"/><path d="M10.5,10.5 L1.8,5.5 A10,10 0 0 1 10.5,0.5 Z" fill="#60c860"/></svg><svg class="a" style="left:1304px;top:111px;" width="20" height="20" viewBox="0 0 20 20"><rect x="0" y="0" width="20" height="2" fill="#ddd"/><rect x="0" y="5" width="20" height="3" fill="#ddd"/><rect x="0" y="11" width="20" height="4" fill="#ddd"/><rect x="0" y="16" width="20" height="4" fill="#ddd"/></svg><svg class="a" style="left:1304px;top:143px;" width="20" height="17" viewBox="0 0 20 17"><path d="M0,1 L20,1 M0,5.5 L20,5.5 M0,10.5 L20,10.5" stroke="#ccc" stroke-width="1.5" stroke-dasharray="3,1.5"/><path d="M0,15.5 L20,15.5" stroke="#ccc" stroke-width="1.5"/></svg><div class="a" style="left:1327.6px;top:76.5px;width:170px;height:27px;background:#4a5467;border:1px solid #38404d;"></div><div class="a" style="left:1327.6px;top:107.5px;width:170px;height:27px;background:#4a5467;border:1px solid #38404d;"></div><div class="a" style="left:1327.6px;top:138.5px;width:170px;height:27px;background:#4a5467;border:1px solid #38404d;"></div><div class="a" style="left:1336px;top:80px;width:20px;height:20px;background:#ff0000;border:1px solid #d8d8d8;"></div><div class="t" style="left:1361.70px;top:91.80px;font-size:15px;color:#e9e9e9;transform:scaleX(0.9141);transform-origin:0 0;">ByLayer</div><div class="a" style="left:1336px;top:120px;width:80px;height:1px;background:#e8e8e8;"></div><div class="t" style="left:1418.60px;top:122.20px;font-size:15px;color:#e9e9e9;transform:scaleX(0.9159);transform-origin:0 0;">ByLayer</div><div class="a" style="left:1336px;top:152px;width:80px;height:1px;background:#e8e8e8;"></div><div class="t" style="left:1418.60px;top:153.20px;font-size:15px;color:#e9e9e9;transform:scaleX(0.9159);transform-origin:0 0;">ByLayer</div><svg class="a" style="left:1486.2px;top:87.5px;" width="9" height="5" viewBox="0 0 9 5"><polygon points="0,0 9,0 4.5,5" fill="#d8d8d8"/></svg><svg class="a" style="left:1486.2px;top:118.5px;" width="9" height="5" viewBox="0 0 9 5"><polygon points="0,0 9,0 4.5,5" fill="#d8d8d8"/></svg><svg class="a" style="left:1486.2px;top:149.5px;" width="9" height="5" viewBox="0 0 9 5"><polygon points="0,0 9,0 4.5,5" fill="#d8d8d8"/></svg><div class="t" style="left:1313.40px;top:182.80px;font-size:15px;color:#dfe2e6;transform:scaleX(0.9742);transform-origin:0 0;">Properties</div><svg class="a" style="left:1388.2px;top:180.0px;" width="8" height="5" viewBox="0 0 8 5"><polygon points="0,0 8,0 4.0,5" fill="#d8d8d8"/></svg><svg class="a" style="left:1488px;top:178px;" width="8" height="8" viewBox="0 0 8 8"><path d="M1,1 L7,7 M7,3 L7,7 L3,7" fill="none" stroke="#ccc" stroke-width="1.2"/></svg><svg class="a" style="left:1508px;top:78px;" width="40" height="40" viewBox="0 0 40 40"><path d="M4,6 L1,6 L1,38 L4,38 M30,22 L33,22 L33,38 L30,38" fill="none" stroke="#ccc" stroke-width="1.3"/><rect x="8" y="12" width="12" height="9" fill="#5ab4ec" stroke="#ccc" stroke-width="0.8"/><circle cx="13.5" cy="30" r="5.5" fill="#777c85" stroke="#ccc" stroke-width="0.8"/><polygon points="30,0 32,7 39,5 34,10 39,15 32,13 30,20 28,13 21,15 26,10 21,5 28,7" fill="#f5c75f"/></svg><div class="t" style="left:1507.50px;top:133.10px;font-size:15px;color:#e9e9e9;transform:scaleX(0.9595);transform-origin:0 0;">Group</div><svg class="a" style="left:1558px;top:80px;" width="20" height="20" viewBox="0 0 20 20"><path d="M2,1 L0,1 L0,19 L2,19 M14,1 L16,1 L16,19 L14,19" fill="none" stroke="#ccc" stroke-width="1"/><rect x="3" y="3" width="8" height="6" fill="none" stroke="#5ab4ec" stroke-width="1"/><circle cx="7" cy="14" r="3" fill="#777c85" stroke="#ccc" stroke-width="0.8"/><path d="M14,11 L20,17 M20,11 L14,17" stroke="#e05050" stroke-width="1.6"/></svg><svg class="a" style="left:1558px;top:111px;" width="20" height="20" viewBox="0 0 20 20"><path d="M2,1 L0,1 L0,19 L2,19 M14,1 L16,1 L16,10" fill="none" stroke="#ccc" stroke-width="1"/><rect x="3" y="3" width="8" height="6" fill="none" stroke="#5ab4ec" stroke-width="1"/><circle cx="7" cy="14" r="3" fill="#777c85" stroke="#ccc" stroke-width="0.8"/><polygon points="11,18 18,11 20,13 13,20" fill="#f5c75f"/></svg><div class="a" style="left:1553px;top:137.5px;width:29px;height:27.5px;background:#3f4d61;border:1.3px solid #4ba6e4;"></div><svg class="a" style="left:1558px;top:142px;" width="20" height="20" viewBox="0 0 20 20"><path d="M2,1 L0,1 L0,17 L2,17 M14,1 L16,1" fill="none" stroke="#ccc" stroke-width="1"/><rect x="4" y="3" width="7" height="5" fill="none" stroke="#7fd08a" stroke-width="1"/><circle cx="7.5" cy="13" r="3" fill="none" stroke="#7fd08a" stroke-width="1"/><polygon points="12,8 12,20 15,17 18,21 19,20 16,16 20,16" fill="#eee"/></svg><div class="t" style="left:1512.50px;top:182.80px;font-size:15px;color:#dfe2e6;transform:scaleX(0.9392);transform-origin:0 0;">Groups</div><svg class="a" style="left:1567.2px;top:180.0px;" width="8" height="5" viewBox="0 0 8 5"><polygon points="0,0 8,0 4.0,5" fill="#d8d8d8"/></svg><svg class="a" style="left:1613px;top:92px;" width="36" height="11" viewBox="0 0 36 11"><rect x="0" y="0" width="36" height="11" fill="#f5c75f"/><path d="M3,0 L3,4 M7,0 L7,3 M11,0 L11,4 M15,0 L15,3 M19,0 L19,4 M23,0 L23,3 M27,0 L27,4 M31,0 L31,3" stroke="#3b4453" stroke-width="1"/></svg><div class="t" style="left:1603.70px;top:134.40px;font-size:15px;color:#e9e9e9;transform:scaleX(0.9424);transform-origin:0 0;">Measure</div><svg class="a" style="left:1627.7px;top:146.7px;" width="7" height="4" viewBox="0 0 7 4"><polygon points="0,0 7,0 3.5,4" fill="#d8d8d8"/></svg><svg class="a" style="left:1677px;top:80px;" width="22" height="20" viewBox="0 0 22 20"><polygon points="0,5 0,17 3,14 6,19 8,18 5,13 9,13" fill="#eee"/><polygon points="5,0 11,0 8,5 12,5 5,12 7,6 3,6" fill="#f5c75f"/><rect x="9" y="8" width="12" height="11" fill="#eee"/><path d="M12,11 L19,11 M12,14 L19,14 M12,17 L19,17" stroke="#5ab4ec" stroke-width="1.2"/></svg><svg class="a" style="left:1677px;top:110px;" width="22" height="22" viewBox="0 0 22 22"><rect x="1" y="1" width="17" height="17" fill="none" stroke="#5fbf6f" stroke-width="1" stroke-dasharray="2,1"/><rect x="4" y="4" width="12" height="11" fill="#7fd08a"/><polygon points="13,9 13,21 16,18 19,22 20,21 17,17 21,17" fill="#eee"/></svg><svg class="a" style="left:1679px;top:141px;" width="14" height="22" viewBox="0 0 14 22"><rect x="0" y="0" width="14" height="21" rx="1" fill="#cfcfcf"/><rect x="2" y="2" width="10" height="5" fill="#777"/><path d="M3,10 L5,10 M6.5,10 L8.5,10 M10,10 L12,10 M3,13 L5,13 M6.5,13 L8.5,13 M10,13 L12,13 M3,16 L5,16 M6.5,16 L8.5,16 M10,16 L12,16" stroke="#777" stroke-width="1.5"/></svg><div class="t" style="left:1613.00px;top:182.80px;font-size:15px;color:#dfe2e6;transform:scaleX(1.0343);transform-origin:0 0;">Utilities</div><svg class="a" style="left:1671.5px;top:180.0px;" width="8" height="5" viewBox="0 0 8 5"><polygon points="0,0 8,0 4.0,5" fill="#d8d8d8"/></svg><svg class="a" style="left:1724px;top:79px;" width="34" height="40" viewBox="0 0 34 40"><rect x="0" y="4" width="28" height="34" fill="#c69c6d"/><rect x="9" y="0" width="10" height="6" rx="1" fill="#eee"/><polygon points="10,12 25,12 32,19 32,40 10,40" fill="#dcdcdc"/><polygon points="25,12 25,19 32,19" fill="#f5f5f5"/></svg><div class="t" style="left:1724.50px;top:134.40px;font-size:15px;color:#e9e9e9;transform:scaleX(0.8604);transform-origin:0 0;">Paste</div><svg class="a" style="left:1737.7px;top:147.5px;" width="7" height="4" viewBox="0 0 7 4"><polygon points="0,0 7,0 3.5,4" fill="#d8d8d8"/></svg><svg class="a" style="left:1776px;top:80px;" width="22" height="20" viewBox="0 0 22 20"><rect x="0" y="0" width="15" height="16" fill="#d0d0d0"/><path d="M3,4 L12,4 M3,7 L12,7 M3,10 L9,10" stroke="#888" stroke-width="1"/><path d="M10,8 L19,16 M19,8 L10,16" stroke="#eee" stroke-width="1.5"/><circle cx="10" cy="17" r="2.5" fill="none" stroke="#eee" stroke-width="1.3"/><circle cx="19" cy="17" r="2.5" fill="none" stroke="#eee" stroke-width="1.3"/></svg><svg class="a" style="left:1779px;top:111px;" width="18" height="20" viewBox="0 0 18 20"><polygon points="0,0 8,0 11,3 11,15 0,15" fill="#bcbcbc"/><polygon points="5,5 13,5 17,9 17,20 5,20" fill="#dcdcdc"/></svg><svg class="a" style="left:1803.5px;top:88.5px;" width="7" height="4" viewBox="0 0 7 4"><polygon points="0,0 7,0 3.5,4" fill="#d8d8d8"/></svg><svg class="a" style="left:1803.5px;top:119.5px;" width="7" height="4" viewBox="0 0 7 4"><polygon points="0,0 7,0 3.5,4" fill="#d8d8d8"/></svg><div class="t" style="left:1731.20px;top:182.80px;font-size:15px;color:#dfe2e6;transform:scaleX(1.0124);transform-origin:0 0;">Clipboard</div><svg class="a" style="left:1840px;top:82px;" width="40" height="31" viewBox="0 0 40 31"><polygon points="0,0 17,0 17,14 40,14 40,31 0,31" fill="#dcdcdc"/></svg><div class="t" style="left:1844.50px;top:134.40px;font-size:15px;color:#e9e9e9;transform:scaleX(0.8921);transform-origin:0 0;">Base</div><svg class="a" style="left:1856.5px;top:146.7px;" width="7" height="4" viewBox="0 0 7 4"><polygon points="0,0 7,0 3.5,4" fill="#d8d8d8"/></svg><div class="t" style="left:1827.50px;top:182.80px;font-size:15px;color:#dfe2e6;transform:scaleX(0.9677);transform-origin:0 0;">View</div><svg class="a" style="left:1868.0px;top:180.0px;" width="8" height="5" viewBox="0 0 8 5"><polygon points="0,0 8,0 4.0,5" fill="#d8d8d8"/></svg><svg class="a" style="left:1887px;top:178px;" width="8" height="8" viewBox="0 0 8 8"><path d="M1,1 L7,7 M7,3 L7,7 L3,7" fill="none" stroke="#ccc" stroke-width="1.2"/></svg><div class="a" style="left:25px;top:204.8px;width:20px;height:2.2px;background:#e6e6e6;"></div><div class="a" style="left:25px;top:210.8px;width:20px;height:2.2px;background:#e6e6e6;"></div><div class="a" style="left:25px;top:217px;width:20px;height:2.2px;background:#e6e6e6;"></div><svg class="a" style="left:56.3px;top:200.5px;" width="12.400000000000006" height="23.19999999999999" viewBox="0 0 12.400000000000006 23.19999999999999"><line x1="2.0" y1="21.19999999999999" x2="10.400000000000006" y2="2.0" stroke="#596070" stroke-width="1.2"/></svg><div class="t" style="left:77.20px;top:212.30px;font-size:15px;color:#e8e8e8;transform:scaleX(0.9723);transform-origin:0 0;">Start</div><div class="t" style="left:138.30px;top:212.30px;font-size:15px;color:#f5f5f5;font-weight:bold;transform:scaleX(0.9430);transform-origin:0 0;">3Cónicas*</div><svg class="a" style="left:218px;top:207px;" width="11" height="11" viewBox="0 0 11 11"><path d="M1,1 L10,10 M10,1 L1,10" stroke="#b4b8bf" stroke-width="2"/></svg><div class="a" style="left:255px;top:210.8px;width:18px;height:2.4px;background:#e6e6e6;"></div><div class="a" style="left:262.8px;top:203px;width:2.4px;height:18px;background:#e6e6e6;"></div><svg class="a" style="left:283.3px;top:200px;" width="11.5" height="23" viewBox="0 0 11.5 23"><line x1="2.0" y1="21" x2="9.5" y2="2" stroke="#596070" stroke-width="1.2"/></svg><div class="a" style="left:25px;top:1013.8px;width:20px;height:2.2px;background:#e6e6e6;"></div><div class="a" style="left:25px;top:1020.7px;width:20px;height:2.2px;background:#e6e6e6;"></div><div class="a" style="left:25px;top:1027.3px;width:20px;height:2.2px;background:#e6e6e6;"></div><svg class="a" style="left:56.3px;top:1009.7px;" width="12.400000000000006" height="22.700000000000045" viewBox="0 0 12.400000000000006 22.700000000000045"><line x1="2.0" y1="20.700000000000045" x2="10.400000000000006" y2="2.0" stroke="#596070" stroke-width="1.2"/></svg><div class="t" style="left:78.70px;top:1022.00px;font-size:15px;color:#e8e8e8;transform:scaleX(1.0207);transform-origin:0 0;">Model</div><div class="t" style="left:153.00px;top:1022.00px;font-size:15px;color:#f5f5f5;font-weight:bold;transform:scaleX(0.9442);transform-origin:0 0;">Layout1</div><div class="t" style="left:239.60px;top:1022.00px;font-size:15px;color:#e8e8e8;transform:scaleX(0.9480);transform-origin:0 0;">Layout2</div><svg class="a" style="left:300px;top:1010px;" width="11.800000000000011" height="22" viewBox="0 0 11.800000000000011 22"><line x1="2" y1="20" x2="9.800000000000011" y2="2" stroke="#596070" stroke-width="1.2"/></svg><div class="a" style="left:324px;top:1020.3px;width:18px;height:2.4px;background:#e6e6e6;"></div><div class="a" style="left:331.8px;top:1012.5px;width:2.4px;height:18px;background:#e6e6e6;"></div><svg class="a" style="left:352px;top:1010px;" width="12" height="22" viewBox="0 0 12 22"><line x1="2" y1="20" x2="10" y2="2" stroke="#596070" stroke-width="1.2"/></svg><div class="a" style="left:6px;top:235px;width:274px;height:1px;background:#30363f;"></div><div class="a" style="left:4px;top:245px;width:278px;height:27px;background:#2d333e;"></div><svg class="a" style="left:13px;top:251px;" width="5" height="13" viewBox="0 0 5 13"><rect x="0" y="0" width="1.3" height="1.3" fill="#cfcfcf"/><rect x="0" y="2.5" width="1.3" height="1.3" fill="#cfcfcf"/><rect x="0" y="5" width="1.3" height="1.3" fill="#cfcfcf"/><rect x="0" y="7.5" width="1.3" height="1.3" fill="#cfcfcf"/><rect x="0" y="10" width="1.3" height="1.3" fill="#cfcfcf"/><rect x="3" y="0" width="1.3" height="1.3" fill="#cfcfcf"/><rect x="3" y="2.5" width="1.3" height="1.3" fill="#cfcfcf"/><rect x="3" y="5" width="1.3" height="1.3" fill="#cfcfcf"/><rect x="3" y="7.5" width="1.3" height="1.3" fill="#cfcfcf"/><rect x="3" y="10" width="1.3" height="1.3" fill="#cfcfcf"/></svg><div class="t" style="left:24.40px;top:258.00px;font-size:15px;color:#e8e8e8;transform:scaleX(0.8214);transform-origin:0 0;">PROPERTIES</div><div class="a" style="left:0px;top:271px;width:27.5px;height:631px;background:#2d333e;border-radius:0 6px 6px 0;"></div><svg class="a" style="left:8px;top:280px;" width="12" height="11" viewBox="0 0 12 11"><path d="M1.5,1.5 L10.5,9.5 M10.5,1.5 L1.5,9.5" stroke="#d8d8d8" stroke-width="2.4"/></svg><svg class="a" style="left:8px;top:303px;" width="13" height="14" viewBox="0 0 13 14"><path d="M1,0 L1,13 M1,4 L4,4 M1,9 L4,9" stroke="#d0d0d0" stroke-width="1.3"/><path d="M4,6.5 L9,6.5" stroke="#d0d0d0" stroke-width="2.5"/><polygon points="8,2.5 13,6.5 8,10.5" fill="#d0d0d0"/></svg><svg class="a" style="left:7px;top:326px;" width="14" height="14" viewBox="0 0 14 14"><circle cx="7" cy="7" r="4.2" fill="none" stroke="#d0d0d0" stroke-width="2.6"/><rect x="5.8" y="-0.5" width="2.4" height="3.5" fill="#d0d0d0" transform="rotate(0 7 7)"/><rect x="5.8" y="-0.5" width="2.4" height="3.5" fill="#d0d0d0" transform="rotate(45 7 7)"/><rect x="5.8" y="-0.5" width="2.4" height="3.5" fill="#d0d0d0" transform="rotate(90 7 7)"/><rect x="5.8" y="-0.5" width="2.4" height="3.5" fill="#d0d0d0" transform="rotate(135 7 7)"/><rect x="5.8" y="-0.5" width="2.4" height="3.5" fill="#d0d0d0" transform="rotate(180 7 7)"/><rect x="5.8" y="-0.5" width="2.4" height="3.5" fill="#d0d0d0" transform="rotate(225 7 7)"/><rect x="5.8" y="-0.5" width="2.4" height="3.5" fill="#d0d0d0" transform="rotate(270 7 7)"/><rect x="5.8" y="-0.5" width="2.4" height="3.5" fill="#d0d0d0" transform="rotate(315 7 7)"/></svg><div class="t" style="left:15px;top:803px;font-size:14px;color:#c9ccd2;transform:translate(-50%,0) rotate(-90deg) scaleX(0.93);transform-origin:50% 0;letter-spacing:0.2px;">ACTIVITY INSIGHTS</div><svg class="a" style="left:5px;top:879px;" width="19" height="22" viewBox="0 0 19 22"><rect x="1" y="3" width="14" height="17" rx="1" fill="#e0e0e0"/><rect x="4" y="1" width="8" height="4" rx="1" fill="#f5f5f5" stroke="#999" stroke-width="0.6"/><path d="M3.5,9 L12,9 M3.5,12 L12,12 M3.5,15 L9,15" stroke="#5ab4ec" stroke-width="1.2"/><polygon points="13,11 18,11 15.5,15 18.5,15 12.5,21 14,16.5 11.5,16.5" fill="#f5c75f"/></svg><div class="a" style="left:28px;top:288px;width:153px;height:27px;background:#4b5669;border-right:1px solid #323844;border-bottom:1px solid #323844;"></div><div class="t" style="left:31.50px;top:301.50px;font-size:15px;color:#e8e8e8;">No selection</div><svg class="a" style="left:166px;top:299px;" width="9" height="5" viewBox="0 0 9 5"><polygon points="0,0 9,0 4.5,5" fill="#d8d8d8"/></svg><svg class="a" style="left:190px;top:290px;" width="24" height="24" viewBox="0 0 24 24"><rect x="1" y="3" width="10" height="9" fill="#8ccbf5"/><rect x="5" y="9" width="10" height="10" fill="#8ccbf5" stroke="#3b4453" stroke-width="0.8"/><path d="M15,1 L15,11 M10,6 L20,6" stroke="#6fd07a" stroke-width="3"/></svg><svg class="a" style="left:221px;top:293px;" width="20" height="20" viewBox="0 0 20 20"><rect x="1" y="1" width="14" height="11" fill="#7fd08a" stroke="#5fbf6f" stroke-width="1" stroke-dasharray="2,1"/><polygon points="11,8 11,20 14,17 17,21 18.5,20 15.5,16 19.5,16" fill="#eee"/></svg><svg class="a" style="left:248px;top:292px;" width="22" height="22" viewBox="0 0 22 22"><polygon points="0,6 0,19 3.5,16 6,21 8,20 5.5,15 10,15" fill="#eee"/><polygon points="6,0 11,0 8.5,4.5 12,4.5 6,11 7.5,6 4.5,6" fill="#f5c75f"/><rect x="9" y="9" width="12" height="12" fill="#eee"/><path d="M12,12 L19,12 M12,15 L19,15 M12,18 L19,18" stroke="#5ab4ec" stroke-width="1.3"/></svg><div class="a" style="left:28px;top:321px;width:240px;height:26.5px;background:#2d333e;"></div><div class="t" style="left:35.20px;top:334.80px;font-size:15px;color:#f5f5f5;font-weight:bold;transform:scaleX(0.9667);transform-origin:0 0;">General</div><svg class="a" style="left:248px;top:331.5px;" width="11" height="6" viewBox="0 0 11 6"><polygon points="0,0 11,0 5.5,6" fill="#d8d8d8"/></svg><div class="a" style="left:47.3px;top:347.5px;width:221px;height:26px;background:#3b4453;border-left:1px solid #2f3540;border-right:1px solid #2f3540;border-bottom:1px solid #2f3540;"></div><div class="a" style="left:143px;top:347.5px;width:1px;height:26px;background:#2f3540;"></div><div class="t" style="left:57.30px;top:360.80px;font-size:15px;color:#e8e8e8;">Color</div><div class="a" style="left:147px;top:352px;width:18px;height:17px;background:#ff0000;border:1px solid #e0e0e0;"></div><div class="t" style="left:172.00px;top:360.80px;font-size:15px;color:#eeeeee;transform:scaleX(0.9268);transform-origin:0 0;">ByLayer</div><div class="a" style="left:47.3px;top:373.5px;width:221px;height:26px;background:#3b4453;border-left:1px solid #2f3540;border-right:1px solid #2f3540;border-bottom:1px solid #2f3540;"></div><div class="a" style="left:143px;top:373.5px;width:1px;height:26px;background:#2f3540;"></div><div class="t" style="left:57.30px;top:386.80px;font-size:15px;color:#e8e8e8;transform:scaleX(0.9248);transform-origin:0 0;">Layer</div><div class="t" style="left:147.30px;top:386.80px;font-size:15px;color:#eeeeee;transform:scaleX(0.9284);transform-origin:0 0;">Janelas</div><div class="a" style="left:47.3px;top:399.5px;width:221px;height:26px;background:#3b4453;border-left:1px solid #2f3540;border-right:1px solid #2f3540;border-bottom:1px solid #2f3540;"></div><div class="a" style="left:143px;top:399.5px;width:1px;height:26px;background:#2f3540;"></div><div class="t" style="left:57.30px;top:412.80px;font-size:15px;color:#e8e8e8;transform:scaleX(0.9910);transform-origin:0 0;">Linetype</div><div class="a" style="left:148px;top:412.0px;width:55px;height:1.2px;background:#e8e8e8;"></div><div class="t" style="left:208.30px;top:412.80px;font-size:15px;color:#eeeeee;transform:scaleX(0.9268);transform-origin:0 0;">ByLayer</div><div class="a" style="left:47.3px;top:425.5px;width:221px;height:26px;background:#3b4453;border-left:1px solid #2f3540;border-right:1px solid #2f3540;border-bottom:1px solid #2f3540;"></div><div class="a" style="left:143px;top:425.5px;width:1px;height:26px;background:#2f3540;"></div><div class="t" style="left:57.30px;top:438.80px;font-size:15px;color:#e8e8e8;transform:scaleX(0.9805);transform-origin:0 0;">Linetype s...</div><div class="t" style="left:147.30px;top:438.80px;font-size:15px;color:#eeeeee;transform:scaleX(0.9307);transform-origin:0 0;">1.0000</div><div class="a" style="left:47.3px;top:451.5px;width:221px;height:26px;background:#3b4453;border-left:1px solid #2f3540;border-right:1px solid #2f3540;border-bottom:1px solid #2f3540;"></div><div class="a" style="left:143px;top:451.5px;width:1px;height:26px;background:#2f3540;"></div><div class="t" style="left:57.30px;top:464.80px;font-size:15px;color:#e8e8e8;transform:scaleX(1.0276);transform-origin:0 0;">Lineweight</div><div class="a" style="left:148px;top:464.0px;width:55px;height:1.2px;background:#e8e8e8;"></div><div class="t" style="left:208.30px;top:464.80px;font-size:15px;color:#eeeeee;transform:scaleX(0.9268);transform-origin:0 0;">ByLayer</div><div class="a" style="left:47.3px;top:477.5px;width:221px;height:26px;background:#3b4453;border-left:1px solid #2f3540;border-right:1px solid #2f3540;border-bottom:1px solid #2f3540;"></div><div class="a" style="left:143px;top:477.5px;width:1px;height:26px;background:#2f3540;"></div><div class="t" style="left:57.30px;top:490.80px;font-size:15px;color:#e8e8e8;transform:scaleX(0.9463);transform-origin:0 0;">Transpare...</div><div class="t" style="left:147.30px;top:490.80px;font-size:15px;color:#eeeeee;transform:scaleX(0.9268);transform-origin:0 0;">ByLayer</div><div class="a" style="left:47.3px;top:503.5px;width:221px;height:26px;background:#3b4453;border-left:1px solid #2f3540;border-right:1px solid #2f3540;border-bottom:1px solid #2f3540;"></div><div class="a" style="left:143px;top:503.5px;width:1px;height:26px;background:#2f3540;"></div><div class="t" style="left:57.30px;top:516.80px;font-size:15px;color:#e8e8e8;transform:scaleX(0.9464);transform-origin:0 0;">Thickness</div><div class="t" style="left:147.30px;top:516.80px;font-size:15px;color:#eeeeee;transform:scaleX(0.9307);transform-origin:0 0;">0.0000</div><div class="a" style="left:28px;top:534.5px;width:240px;height:26.5px;background:#2d333e;"></div><div class="t" style="left:35.20px;top:548.30px;font-size:15px;color:#f5f5f5;font-weight:bold;transform:scaleX(0.9838);transform-origin:0 0;">3D Visualization</div><svg class="a" style="left:248px;top:545.0px;" width="11" height="6" viewBox="0 0 11 6"><polygon points="0,0 11,0 5.5,6" fill="#d8d8d8"/></svg><div class="a" style="left:47.3px;top:560.5px;width:221px;height:26px;background:#3b4453;border-left:1px solid #2f3540;border-right:1px solid #2f3540;border-bottom:1px solid #2f3540;"></div><div class="a" style="left:143px;top:560.5px;width:1px;height:26px;background:#2f3540;"></div><div class="t" style="left:57.30px;top:573.80px;font-size:15px;color:#e8e8e8;transform:scaleX(1.0291);transform-origin:0 0;">Material</div><div class="t" style="left:147.30px;top:573.80px;font-size:15px;color:#eeeeee;transform:scaleX(0.9268);transform-origin:0 0;">ByLayer</div><div class="a" style="left:28px;top:591px;width:240px;height:26.5px;background:#2d333e;"></div><div class="t" style="left:35.20px;top:604.80px;font-size:15px;color:#f5f5f5;font-weight:bold;transform:scaleX(0.9763);transform-origin:0 0;">Layout</div><svg class="a" style="left:248px;top:601.5px;" width="11" height="6" viewBox="0 0 11 6"><polygon points="0,0 11,0 5.5,6" fill="#d8d8d8"/></svg><div class="a" style="left:47.3px;top:617px;width:221px;height:26px;background:#3b4453;border-left:1px solid #2f3540;border-right:1px solid #2f3540;border-bottom:1px solid #2f3540;"></div><div class="a" style="left:143px;top:617px;width:1px;height:26px;background:#2f3540;"></div><div class="t" style="left:57.30px;top:630.30px;font-size:15px;color:#e8e8e8;">Layout na...</div><div class="t" style="left:147.30px;top:630.30px;font-size:15px;color:#eeeeee;transform:scaleX(0.9554);transform-origin:0 0;">Layout1</div><div class="a" style="left:47.3px;top:643px;width:221px;height:26px;background:#3b4453;border-left:1px solid #2f3540;border-right:1px solid #2f3540;border-bottom:1px solid #2f3540;"></div><div class="a" style="left:143px;top:643px;width:1px;height:26px;background:#2f3540;"></div><div class="t" style="left:57.30px;top:656.30px;font-size:15px;color:#e8e8e8;transform:scaleX(0.9744);transform-origin:0 0;">Page setu...</div><div class="t" style="left:147.30px;top:656.30px;font-size:15px;color:#9ba1aa;transform:scaleX(1.0117);transform-origin:0 0;">&lt;None&gt;</div><div class="a" style="left:47.3px;top:669px;width:221px;height:26px;background:#3b4453;border-left:1px solid #2f3540;border-right:1px solid #2f3540;border-bottom:1px solid #2f3540;"></div><div class="a" style="left:143px;top:669px;width:1px;height:26px;background:#2f3540;"></div><div class="t" style="left:57.30px;top:682.30px;font-size:15px;color:#e8e8e8;">DPI to rast...</div><div class="t" style="left:147.30px;top:682.30px;font-size:15px;color:#eeeeee;transform:scaleX(0.9590);transform-origin:0 0;">300</div><div class="a" style="left:28px;top:700.5px;width:240px;height:26.5px;background:#2d333e;"></div><div class="t" style="left:35.20px;top:714.30px;font-size:15px;color:#f5f5f5;font-weight:bold;transform:scaleX(0.9747);transform-origin:0 0;">Plot style</div><svg class="a" style="left:248px;top:711.0px;" width="11" height="6" viewBox="0 0 11 6"><polygon points="0,0 11,0 5.5,6" fill="#d8d8d8"/></svg><div class="a" style="left:47.3px;top:726.5px;width:221px;height:26px;background:#3b4453;border-left:1px solid #2f3540;border-right:1px solid #2f3540;border-bottom:1px solid #2f3540;"></div><div class="a" style="left:143px;top:726.5px;width:1px;height:26px;background:#2f3540;"></div><div class="t" style="left:57.30px;top:739.80px;font-size:15px;color:#e8e8e8;transform:scaleX(0.9859);transform-origin:0 0;">Plot style</div><div class="t" style="left:147.30px;top:739.80px;font-size:15px;color:#9ba1aa;transform:scaleX(0.9747);transform-origin:0 0;">ByColor</div><div class="a" style="left:47.3px;top:752.5px;width:221px;height:26px;background:#3b4453;border-left:1px solid #2f3540;border-right:1px solid #2f3540;border-bottom:1px solid #2f3540;"></div><div class="a" style="left:143px;top:752.5px;width:1px;height:26px;background:#2f3540;"></div><div class="t" style="left:57.30px;top:765.80px;font-size:15px;color:#e8e8e8;transform:scaleX(1.0160);transform-origin:0 0;">Plot style t...</div><div class="t" style="left:147.30px;top:765.80px;font-size:15px;color:#eeeeee;transform:scaleX(0.9876);transform-origin:0 0;">acad.ctb</div><div class="a" style="left:47.3px;top:778.5px;width:221px;height:26px;background:#3b4453;border-left:1px solid #2f3540;border-right:1px solid #2f3540;border-bottom:1px solid #2f3540;"></div><div class="a" style="left:143px;top:778.5px;width:1px;height:26px;background:#2f3540;"></div><div class="t" style="left:57.30px;top:791.80px;font-size:15px;color:#e8e8e8;transform:scaleX(1.0128);transform-origin:0 0;">Plot table...</div><div class="t" style="left:147.30px;top:791.80px;font-size:15px;color:#9ba1aa;transform:scaleX(0.9554);transform-origin:0 0;">Layout1</div><div class="a" style="left:47.3px;top:804.5px;width:221px;height:26px;background:#3b4453;border-left:1px solid #2f3540;border-right:1px solid #2f3540;border-bottom:1px solid #2f3540;"></div><div class="a" style="left:143px;top:804.5px;width:1px;height:26px;background:#2f3540;"></div><div class="t" style="left:57.30px;top:817.80px;font-size:15px;color:#e8e8e8;transform:scaleX(1.0128);transform-origin:0 0;">Plot table...</div><div class="t" style="left:147.30px;top:817.80px;font-size:15px;color:#9ba1aa;transform:scaleX(1.0098);transform-origin:0 0;">Color dependent</div><div class="a" style="left:28px;top:835.5px;width:240px;height:26.5px;background:#2d333e;"></div><div class="t" style="left:35.20px;top:849.30px;font-size:15px;color:#f5f5f5;font-weight:bold;">View</div><svg class="a" style="left:248px;top:846.0px;" width="11" height="6" viewBox="0 0 11 6"><polygon points="0,0 11,0 5.5,6" fill="#d8d8d8"/></svg><div class="a" style="left:47.3px;top:861.5px;width:221px;height:26px;background:#3b4453;border-left:1px solid #2f3540;border-right:1px solid #2f3540;border-bottom:1px solid #2f3540;"></div><div class="a" style="left:143px;top:861.5px;width:1px;height:26px;background:#2f3540;"></div><div class="t" style="left:57.30px;top:874.80px;font-size:15px;color:#e8e8e8;transform:scaleX(0.9629);transform-origin:0 0;">Center X</div><div class="t" style="left:147.30px;top:874.80px;font-size:15px;color:#9ba1aa;transform:scaleX(0.9307);transform-origin:0 0;">0.1228</div><div class="a" style="left:47.3px;top:887.5px;width:221px;height:26px;background:#3b4453;border-left:1px solid #2f3540;border-right:1px solid #2f3540;border-bottom:1px solid #2f3540;"></div><div class="a" style="left:143px;top:887.5px;width:1px;height:26px;background:#2f3540;"></div><div class="t" style="left:57.30px;top:900.80px;font-size:15px;color:#e8e8e8;transform:scaleX(0.9674);transform-origin:0 0;">Center Y</div><div class="t" style="left:147.30px;top:900.80px;font-size:15px;color:#9ba1aa;transform:scaleX(0.9307);transform-origin:0 0;">0.1450</div><div class="a" style="left:47.3px;top:913.5px;width:221px;height:26px;background:#3b4453;border-left:1px solid #2f3540;border-right:1px solid #2f3540;border-bottom:1px solid #2f3540;"></div><div class="a" style="left:143px;top:913.5px;width:1px;height:26px;background:#2f3540;"></div><div class="t" style="left:57.30px;top:926.80px;font-size:15px;color:#e8e8e8;transform:scaleX(0.9768);transform-origin:0 0;">Center Z</div><div class="t" style="left:147.30px;top:926.80px;font-size:15px;color:#9ba1aa;transform:scaleX(0.9307);transform-origin:0 0;">0.0000</div><div class="a" style="left:47.3px;top:939.5px;width:221px;height:26px;background:#3b4453;border-left:1px solid #2f3540;border-right:1px solid #2f3540;border-bottom:1px solid #2f3540;"></div><div class="a" style="left:143px;top:939.5px;width:1px;height:26px;background:#2f3540;"></div><div class="t" style="left:57.30px;top:952.80px;font-size:15px;color:#e8e8e8;transform:scaleX(1.0609);transform-origin:0 0;">Height</div><div class="t" style="left:147.30px;top:952.80px;font-size:15px;color:#9ba1aa;transform:scaleX(0.9307);transform-origin:0 0;">0.3094</div><div class="a" style="left:47.3px;top:965.5px;width:221px;height:26px;background:#3b4453;border-left:1px solid #2f3540;border-right:1px solid #2f3540;border-bottom:1px solid #2f3540;"></div><div class="a" style="left:143px;top:965.5px;width:1px;height:26px;background:#2f3540;"></div><div class="t" style="left:57.30px;top:978.80px;font-size:15px;color:#e8e8e8;transform:scaleX(1.1215);transform-origin:0 0;">Width</div><div class="t" style="left:147.30px;top:978.80px;font-size:15px;color:#9ba1aa;transform:scaleX(0.9307);transform-origin:0 0;">0.4150</div><div class="a" style="left:28px;top:981px;width:254px;height:25px;background:#3b4453;"></div><div class="a" style="left:282px;top:232px;width:5px;height:769px;background:#363d4a;"></div><div class="a" style="left:498px;top:240px;width:521px;height:735px;background:#ffffff;box-shadow:0 0 7px 2px rgba(0,0,0,0.28);"></div><svg class="a" style="left:0px;top:0px;pointer-events:none;" width="1920" height="1047" viewBox="0 0 1920 1047"><rect x="539.5" y="266.5" width="198.0" height="209.0" fill="none" stroke="#ff0000" stroke-width="1.1"/><rect x="749.5" y="267.5" width="262.0" height="209.0" fill="none" stroke="#ff0000" stroke-width="1.1"/><rect x="539.5" y="494.5" width="198.0" height="209.0" fill="none" stroke="#ff0000" stroke-width="1.1"/><rect x="749.5" y="478.5" width="262.0" height="483.0" fill="none" stroke="#ff0000" stroke-width="1.1"/><circle cx="647.3" cy="370.7" r="62.3" fill="none" stroke="#ff1010" stroke-width="1.1"/><ellipse cx="638" cy="607.3" rx="54.6" ry="62.3" fill="none" stroke="#00ee00" stroke-width="1.1"/><path d="M766.4,407.1 L989.7,407.1 M766.4,407.1 Q878,229 989.7,407.1" fill="none" stroke="#ffff00" stroke-width="1.3"/><path d="M763.9,544.3 L1000.4,544.3 M763.9,546.1 L767.8,551.2 L771.8,556.3 L775.7,561.4 L779.7,566.5 L783.6,571.6 L787.5,576.6 L791.5,581.6 L795.4,586.6 L799.4,591.5 L803.3,596.5 L807.3,601.4 L811.2,606.2 L815.1,611.0 L819.1,615.7 L823.0,620.4 L827.0,625.0 L830.9,629.5 L834.9,633.9 L838.8,638.2 L842.7,642.3 L846.7,646.3 L850.6,650.1 L854.6,653.6 L858.5,656.8 L862.4,659.7 L866.4,662.2 L870.3,664.2 L874.3,665.6 L878.2,666.5 L882.1,666.8 L886.1,666.4 L890.0,665.5 L894.0,663.9 L897.9,661.9 L901.9,659.3 L905.8,656.4 L909.7,653.1 L913.7,649.6 L917.6,645.8 L921.6,641.8 L925.5,637.7 L929.5,633.4 L933.4,628.9 L937.3,624.4 L941.3,619.8 L945.2,615.1 L949.2,610.4 L953.1,605.6 L957.0,600.7 L961.0,595.8 L964.9,590.9 L968.9,586.0 L972.8,581.0 L976.8,576.0 L980.7,570.9 L984.6,565.9 L988.6,560.8 L992.5,555.7 L996.5,550.6 L1000.4,545.5" fill="none" stroke="#00e5ff" stroke-width="1.1"/><path d="M763.9,895.5 L1000.4,895.5 M763.9,894.1 L767.8,889.0 L771.8,883.9 L775.7,878.8 L779.7,873.7 L783.6,868.6 L787.5,863.6 L791.5,858.6 L795.4,853.6 L799.4,848.7 L803.3,843.7 L807.3,838.8 L811.2,834.0 L815.1,829.2 L819.1,824.5 L823.0,819.8 L827.0,815.2 L830.9,810.7 L834.9,806.3 L838.8,802.0 L842.7,797.9 L846.7,793.9 L850.6,790.1 L854.6,786.6 L858.5,783.4 L862.4,780.5 L866.4,778.0 L870.3,776.0 L874.3,774.6 L878.2,773.7 L882.1,773.4 L886.1,773.8 L890.0,774.7 L894.0,776.3 L897.9,778.3 L901.9,780.9 L905.8,783.8 L909.7,787.1 L913.7,790.6 L917.6,794.4 L921.6,798.4 L925.5,802.5 L929.5,806.8 L933.4,811.3 L937.3,815.8 L941.3,820.4 L945.2,825.1 L949.2,829.8 L953.1,834.6 L957.0,839.5 L961.0,844.4 L964.9,849.3 L968.9,854.2 L972.8,859.2 L976.8,864.2 L980.7,869.3 L984.6,874.3 L988.6,879.4 L992.5,884.5 L996.5,889.6 L1000.4,894.7" fill="none" stroke="#00e5ff" stroke-width="1.1"/><g stroke="#d6d6d6" fill="none" stroke-width="0.8" stroke-dasharray="2,1.5"><rect x="697" y="285" width="17" height="23" rx="2"/><line x1="697" y1="301" x2="714" y2="301"/></g><rect x="698" y="286" width="15" height="14" fill="#eeeeee"/><g fill="#e2e2e2" font-family="Liberation Sans" font-size="7"><text x="702" y="281">N</text><text x="683" y="300">W</text><text x="722" y="300">E</text><text x="702" y="320">S</text></g><rect x="678" y="327" width="54" height="22" rx="4" fill="#f7f7f8"/><text x="682" y="343" font-family="Liberation Sans" font-size="14" fill="#e3e3e3">Par</text></svg><div class="a" style="left:1242px;top:249px;width:15px;height:7px;background:#f2f2f2;border:1.6px solid #3a3f48;"></div><div class="a" style="left:1271px;top:242px;width:11px;height:14px;background:#f2f2f2;border:1.6px solid #3a3f48;"></div><div class="a" style="left:1267px;top:246px;width:12px;height:11px;background:#f2f2f2;border:1.6px solid #3a3f48;"></div><div class="a" style="left:1271px;top:250px;width:4px;height:4px;background:#555a62;"></div><svg class="a" style="left:1292px;top:243px;" width="13" height="13" viewBox="0 0 13 13"><path d="M2,2 L11,11 M11,2 L2,11" stroke="#3a3f48" stroke-width="4.2"/><path d="M2,2 L11,11 M11,2 L2,11" stroke="#f5f5f5" stroke-width="2.4"/></svg><div class="a" style="left:1273px;top:523px;width:42px;height:162px;background:#9b9b9b;border:1.5px solid #727272;border-radius:6px;"></div><svg class="a" style="left:1273px;top:523px;" width="42" height="162" viewBox="0 0 42 162"><circle cx="33" cy="8" r="4" fill="none" stroke="#808080" stroke-width="1"/><path d="M31,6 L35,10 M35,6 L31,10" stroke="#808080" stroke-width="1"/><line x1="3" y1="14" x2="39" y2="14" stroke="#8a8a8a" stroke-width="1"/><path d="M20,26 Q33,26 34,40 Q30,48 18,48 Q6,46 6,36 Q7,26 20,26 Z" fill="none" stroke="#888" stroke-width="1.3"/><circle cx="17" cy="37" r="5" fill="none" stroke="#888" stroke-width="1.3"/><text x="20" y="55" font-family="Liberation Sans" font-weight="bold" font-size="10" fill="#7b8fae">2D</text><line x1="3" y1="58" x2="39" y2="58" stroke="#8a8a8a" stroke-width="1"/><path d="M12,82 Q8,75 9,72 Q11,70 13,73 L13,64 Q14,61 16,64 L16,72 L17,62 Q19,60 20,62 L20,72 L22,63 Q24,61 25,64 L24,73 L27,67 Q29,66 29,69 Q28,80 24,87 Q18,91 12,82 Z" fill="none" stroke="#888" stroke-width="1.2"/><path d="M7,98 L24,115 M24,98 L7,115 M7,98 L7,103 M7,98 L12,98 M24,98 L19,98 M24,98 L24,103 M7,115 L7,110 M7,115 L12,115" stroke="#888" stroke-width="1.2" fill="none"/><circle cx="27" cy="119" r="5" fill="#a4a4a4" stroke="#888" stroke-width="1.4"/><line x1="31" y1="123" x2="35" y2="127" stroke="#888" stroke-width="2"/><polygon points="17,135 23,135 20,138" fill="#888"/><rect x="30" y="149" width="8" height="8" rx="2" fill="none" stroke="#8a8a8a" stroke-width="1"/></svg><div class="a" style="left:1133px;top:791.5px;width:96px;height:1px;background:#000;"></div><div class="a" style="left:1180.5px;top:744px;width:1px;height:96px;background:#000;"></div><div class="a" style="left:1177px;top:788px;width:9px;height:9px;border:1px solid #000;background:#8b8b8b;"></div><svg class="a" style="left:298px;top:874px;" width="72" height="116" viewBox="0 0 72 116"><g stroke="#0a36ff" stroke-width="1.1" fill="none"><path d="M4.5,4.5 L4.5,111.5 L66.5,111.5 Z"/><rect x="4.5" y="102.5" width="9" height="9"/><path d="M5,32 L12,39 M20,31 L12,39 L12,48"/><path d="M42,96 L57,110 M55,94 L44,107"/></g></svg><div class="a" style="left:504px;top:967px;width:72px;height:33px;background:rgba(52,58,68,0.74);border-radius:5px 0 0 5px;"></div><svg class="a" style="left:509px;top:975px;" width="7" height="18" viewBox="0 0 7 18"><rect x="0" y="0" width="2" height="2" fill="#e0e0e0"/><rect x="0" y="4" width="2" height="2" fill="#e0e0e0"/><rect x="0" y="8" width="2" height="2" fill="#e0e0e0"/><rect x="0" y="12" width="2" height="2" fill="#e0e0e0"/><rect x="0" y="16" width="2" height="2" fill="#e0e0e0"/><rect x="4" y="0" width="2" height="2" fill="#e0e0e0"/><rect x="4" y="4" width="2" height="2" fill="#e0e0e0"/><rect x="4" y="8" width="2" height="2" fill="#e0e0e0"/><rect x="4" y="12" width="2" height="2" fill="#e0e0e0"/><rect x="4" y="16" width="2" height="2" fill="#e0e0e0"/></svg><svg class="a" style="left:523px;top:976px;" width="12" height="12" viewBox="0 0 12 12"><path d="M1.5,1.5 L10.5,10.5 M10.5,1.5 L1.5,10.5" stroke="#d4d4d4" stroke-width="1.8"/></svg><svg class="a" style="left:551px;top:975px;" width="20" height="18" viewBox="0 0 20 18"><path d="M2,16 L11,7" stroke="#cfcfcf" stroke-width="3" stroke-linecap="round"/><path d="M11,7 Q9,2 14,1 L13,4 L16,6 L18,4 Q19,9 13,9" fill="#cfcfcf" stroke="#cfcfcf" stroke-width="1"/></svg><div class="a" style="left:576px;top:967px;width:526px;height:33px;background:rgba(255,255,255,0.72);border-radius:5px;border-top:1px solid rgba(60,60,60,0.5);"></div><svg class="a" style="left:581px;top:976px;" width="20" height="16" viewBox="0 0 20 16"><rect x="0.5" y="0.5" width="19" height="15" fill="#d8d8d8" stroke="#6a6a6a" stroke-width="1"/><rect x="0.5" y="0.5" width="19" height="3" fill="#6a6a6a"/><rect x="1.5" y="1" width="1.5" height="1.5" fill="#fff"/><path d="M2,7 L5,9 L2,11 M6,12 L10,12" stroke="#6a6a6a" stroke-width="1" fill="none"/></svg><svg class="a" style="left:604px;top:982px;" width="9" height="5" viewBox="0 0 9 5"><polygon points="0,0 9,0 4.5,5" fill="#6a6a6a"/></svg><div class="t" style="left:622.60px;top:984.00px;font-size:14px;color:#747474;font-style:italic;transform:scaleX(1.0576);transform-origin:0 0;font-family:'Liberation Mono',monospace;">Type a command</div><svg class="a" style="left:1084px;top:981px;" width="10" height="6" viewBox="0 0 10 6"><polygon points="0,6 10,6 5,0" fill="#6a6a6a"/></svg><div class="a" style="left:1323px;top:235px;width:591px;height:28.5px;background:#2d333e;border-radius:4px 4px 0 0;"></div><svg class="a" style="left:1331px;top:242px;" width="5" height="13" viewBox="0 0 5 13"><rect x="0" y="0" width="1.3" height="1.3" fill="#cfcfcf"/><rect x="0" y="2.5" width="1.3" height="1.3" fill="#cfcfcf"/><rect x="0" y="5" width="1.3" height="1.3" fill="#cfcfcf"/><rect x="0" y="7.5" width="1.3" height="1.3" fill="#cfcfcf"/><rect x="0" y="10" width="1.3" height="1.3" fill="#cfcfcf"/><rect x="3" y="0" width="1.3" height="1.3" fill="#cfcfcf"/><rect x="3" y="2.5" width="1.3" height="1.3" fill="#cfcfcf"/><rect x="3" y="5" width="1.3" height="1.3" fill="#cfcfcf"/><rect x="3" y="7.5" width="1.3" height="1.3" fill="#cfcfcf"/><rect x="3" y="10" width="1.3" height="1.3" fill="#cfcfcf"/></svg><div class="t" style="left:1342.00px;top:248.80px;font-size:15px;color:#e8e8e8;transform:scaleX(0.8755);transform-origin:0 0;">LAYER PROPERTIES MANAGER</div><div class="t" style="left:1329.50px;top:285.00px;font-size:15px;color:#ececec;transform:scaleX(0.9364);transform-origin:0 0;">Current layer: Janelas</div><div class="a" style="left:1759px;top:270px;width:155px;height:20px;background:#454e5f;"></div><div class="t" style="left:1759.60px;top:280.80px;font-size:15px;color:#a9adb5;transform:scaleX(0.9671);transform-origin:0 0;">Search for layer</div><svg class="a" style="left:1896px;top:272px;" width="16" height="16" viewBox="0 0 16 16"><circle cx="6.5" cy="6.5" r="5" fill="none" stroke="#e0e0e0" stroke-width="1.6"/><line x1="10" y1="10" x2="15" y2="15" stroke="#e0a050" stroke-width="2.2"/></svg><svg class="a" style="left:1326px;top:301px;" width="18" height="21" viewBox="0 0 18 21"><polygon points="0,1 7,1 9,3 17,3 17,15 0,15" fill="#d8d8d8"/><polygon points="7,12 17,12 13.5,16 13.5,21 11,21 11,16" fill="#d8d8d8" stroke="#3b4453" stroke-width="0.8"/></svg><svg class="a" style="left:1354px;top:302px;" width="18" height="16" viewBox="0 0 18 16"><polygon points="0,1 7,1 9,3 17,3 17,15 0,15" fill="#d8d8d8"/></svg><div class="a" style="left:1380px;top:301px;width:1px;height:21px;background:#262c35;"></div><svg class="a" style="left:1388px;top:301px;" width="22" height="22" viewBox="0 0 22 22"><polygon points="1,6 5,1 15,1 11,6" fill="#d8d8d8" stroke="#3b4453" stroke-width="1"/><polygon points="1,10 5,5 15,5 11,10" fill="#bbb" stroke="#3b4453" stroke-width="1"/><rect x="10" y="8" width="10" height="13" fill="#f0f0f0"/><rect x="12" y="10" width="6" height="4" fill="#5ab4ec"/></svg><svg class="a" style="left:1420px;top:301px;" width="22" height="22" viewBox="0 0 22 22"><polygon points="1,6 5,1 15,1 11,6" fill="#d8d8d8" stroke="#3b4453" stroke-width="1"/><polygon points="1,10 5,5 15,5 11,10" fill="#d8d8d8" stroke="#3b4453" stroke-width="1"/><polygon points="1,14 5,9 15,9 11,14" fill="#d8d8d8" stroke="#3b4453" stroke-width="1"/><polygon points="14,10 15.5,14 19.5,14 16.5,16.5 17.5,20.5 14,18 10.5,20.5 11.5,16.5 8.5,14 12.5,14" fill="#f5c75f"/></svg><svg class="a" style="left:1447px;top:301px;" width="22" height="22" viewBox="0 0 22 22"><polygon points="1,6 5,1 15,1 11,6" fill="#d8d8d8" stroke="#3b4453" stroke-width="1"/><polygon points="1,10 5,5 15,5 11,10" fill="#d8d8d8" stroke="#3b4453" stroke-width="1"/><polygon points="1,14 5,9 15,9 11,14" fill="#d8d8d8" stroke="#3b4453" stroke-width="1"/><circle cx="15" cy="16" r="4.5" fill="none" stroke="#5ab4ec" stroke-width="1.3"/><path d="M10.5,16 L19.5,16 M15,11.5 L15,20.5" stroke="#5ab4ec" stroke-width="1"/></svg><svg class="a" style="left:1475px;top:301px;" width="22" height="22" viewBox="0 0 22 22"><polygon points="1,6 5,1 15,1 11,6" fill="#d8d8d8" stroke="#3b4453" stroke-width="1"/><polygon points="1,10 5,5 15,5 11,10" fill="#d8d8d8" stroke="#3b4453" stroke-width="1"/><polygon points="1,14 5,9 15,9 11,14" fill="#d8d8d8" stroke="#3b4453" stroke-width="1"/><path d="M12,13 L19,20 M19,13 L12,20" stroke="#e05050" stroke-width="2"/></svg><svg class="a" style="left:1502px;top:301px;" width="22" height="22" viewBox="0 0 22 22"><polygon points="1,6 5,1 15,1 11,6" fill="#d8d8d8" stroke="#3b4453" stroke-width="1"/><polygon points="1,10 5,5 15,5 11,10" fill="#d8d8d8" stroke="#3b4453" stroke-width="1"/><polygon points="1,14 5,9 15,9 11,14" fill="#d8d8d8" stroke="#3b4453" stroke-width="1"/><path d="M11,16 L14,19 L20,12" fill="none" stroke="#5fd070" stroke-width="2"/></svg><svg class="a" style="left:1825px;top:302px;" width="21" height="20" viewBox="0 0 21 20"><path d="M3,9 A7.5,7.5 0 0 1 16.5,5" fill="none" stroke="#3ec46d" stroke-width="3"/><polygon points="13,1 20,2 18,9" fill="#3ec46d"/><path d="M18,11 A7.5,7.5 0 0 1 4.5,15" fill="none" stroke="#3ec46d" stroke-width="3"/><polygon points="8,19 1,18 3,11" fill="#3ec46d"/></svg><svg class="a" style="left:1852px;top:302px;" width="21" height="20" viewBox="0 0 21 20"><rect x="4" y="0" width="8" height="10" fill="#d8d8d8"/><polygon points="0,16 5,10 20,10 15,16" fill="#9a9ea6"/><polygon points="12,4 18,8 12,12" fill="#d8d8d8"/></svg><svg class="a" style="left:1880px;top:301px;" width="21" height="21" viewBox="0 0 21 21"><circle cx="10.5" cy="10.5" r="6" fill="none" stroke="#e6e6e6" stroke-width="4"/><rect x="8.7" y="0" width="3.6" height="5" fill="#e6e6e6" transform="rotate(0 10.5 10.5)"/><rect x="8.7" y="0" width="3.6" height="5" fill="#e6e6e6" transform="rotate(45 10.5 10.5)"/><rect x="8.7" y="0" width="3.6" height="5" fill="#e6e6e6" transform="rotate(90 10.5 10.5)"/><rect x="8.7" y="0" width="3.6" height="5" fill="#e6e6e6" transform="rotate(135 10.5 10.5)"/><rect x="8.7" y="0" width="3.6" height="5" fill="#e6e6e6" transform="rotate(180 10.5 10.5)"/><rect x="8.7" y="0" width="3.6" height="5" fill="#e6e6e6" transform="rotate(225 10.5 10.5)"/><rect x="8.7" y="0" width="3.6" height="5" fill="#e6e6e6" transform="rotate(270 10.5 10.5)"/><rect x="8.7" y="0" width="3.6" height="5" fill="#e6e6e6" transform="rotate(315 10.5 10.5)"/></svg><div class="a" style="left:1323.5px;top:326px;width:33px;height:624px;background:#3b4453;border:1px solid #2f3540;"></div><svg class="a" style="left:1335px;top:336px;" width="15" height="11" viewBox="0 0 15 11"><path d="M1.5,1 L5.5,5.5 L1.5,10 M7.5,1 L11.5,5.5 L7.5,10" fill="none" stroke="#d8d8d8" stroke-width="2.2"/></svg><svg class="a" style="left:1335px;top:933px;" width="15" height="11" viewBox="0 0 15 11"><path d="M1.5,1 L5.5,5.5 L1.5,10 M7.5,1 L11.5,5.5 L7.5,10" fill="none" stroke="#d8d8d8" stroke-width="2.2"/></svg><div class="a" style="left:1361px;top:326px;width:114px;height:29px;background:#434c5e;"></div><div class="a" style="left:1478px;top:326px;width:436px;height:29px;background:#434c5e;"></div><div class="a" style="left:1383px;top:326px;width:1px;height:29px;background:#363d4b;"></div><div class="a" style="left:1500.5px;top:326px;width:1px;height:29px;background:#363d4b;"></div><div class="a" style="left:1523.4px;top:326px;width:1px;height:29px;background:#363d4b;"></div><div class="a" style="left:1586px;top:326px;width:1px;height:29px;background:#363d4b;"></div><div class="a" style="left:1600.5px;top:326px;width:1px;height:29px;background:#363d4b;"></div><div class="a" style="left:1643.3px;top:326px;width:1px;height:29px;background:#363d4b;"></div><div class="a" style="left:1703.6px;top:326px;width:1px;height:29px;background:#363d4b;"></div><div class="a" style="left:1763.2px;top:326px;width:1px;height:29px;background:#363d4b;"></div><div class="a" style="left:1854.3px;top:326px;width:1px;height:29px;background:#363d4b;"></div><div class="a" style="left:1475px;top:326px;width:3px;height:602px;background:#2e3440;"></div><div class="t" style="left:1366.60px;top:341.00px;font-size:15px;color:#e6e6e6;transform:scaleX(0.6220);transform-origin:0 0;">S...</div><div class="t" style="left:1389.30px;top:341.00px;font-size:15px;color:#e6e6e6;transform:scaleX(0.9247);transform-origin:0 0;">Name</div><svg class="a" style="left:1464px;top:337px;" width="10" height="6" viewBox="0 0 10 6"><polygon points="0,6 10,6 5,0" fill="#d8d8d8"/></svg><div class="t" style="left:1483.30px;top:341.00px;font-size:15px;color:#e6e6e6;transform:scaleX(0.7499);transform-origin:0 0;">O..</div><div class="t" style="left:1506.00px;top:341.00px;font-size:15px;color:#e6e6e6;transform:scaleX(0.7499);transform-origin:0 0;">F...</div><div class="t" style="left:1529.00px;top:341.00px;font-size:15px;color:#e6e6e6;transform:scaleX(0.8488);transform-origin:0 0;">VP Fre...</div><div class="t" style="left:1591.70px;top:341.00px;font-size:15px;color:#e6e6e6;transform:scaleX(0.8391);transform-origin:0 0;">L</div><div class="t" style="left:1606.00px;top:341.00px;font-size:15px;color:#e6e6e6;transform:scaleX(1.1220);transform-origin:0 0;">Plot</div><div class="t" style="left:1648.70px;top:341.00px;font-size:15px;color:#e6e6e6;transform:scaleX(0.9764);transform-origin:0 0;">Color</div><div class="t" style="left:1708.60px;top:341.00px;font-size:15px;color:#e6e6e6;transform:scaleX(0.8636);transform-origin:0 0;">VP Co...</div><div class="t" style="left:1769.00px;top:341.00px;font-size:15px;color:#e6e6e6;transform:scaleX(0.9875);transform-origin:0 0;">Linetype</div><div class="t" style="left:1859.60px;top:341.00px;font-size:15px;color:#e6e6e6;transform:scaleX(0.9392);transform-origin:0 0;">VP Linet</div><svg class="a" style="left:1363.5px;top:361.7px;" width="17" height="8" viewBox="0 0 17 8"><polygon points="0,7 5,0 17,0 12,7" fill="#6cbcf2"/></svg><div class="t" style="left:1388.40px;top:366.50px;font-size:15px;color:#ececec;transform:scaleX(0.9590);transform-origin:0 0;">0</div><svg class="a" style="left:1482px;top:358.5px;" width="13" height="16" viewBox="0 0 13 16"><circle cx="6.5" cy="6.5" r="6.2" fill="#f5c75f"/><rect x="3.8" y="12" width="5.4" height="4" rx="1.5" fill="#eeeeee"/></svg><svg class="a" style="left:1503px;top:358.5px;" width="17" height="17" viewBox="0 0 17 17"><circle cx="8.5" cy="8.5" r="4.8" fill="#f5c75f"/><path d="M8.5,0.5 L8.5,2.5 M8.5,14.5 L8.5,16.5 M0.5,8.5 L2.5,8.5 M14.5,8.5 L16.5,8.5 M3,3 L4.5,4.5 M12.5,12.5 L14,14 M3,14 L4.5,12.5 M12.5,4.5 L14,3" stroke="#f5c75f" stroke-width="1.1"/></svg><svg class="a" style="left:1546px;top:358.0px;" width="17" height="17" viewBox="0 0 17 17"><rect x="1" y="1" width="12" height="12" fill="#5a606b" stroke="#c8c8c8" stroke-width="1" stroke-dasharray="3.5,1.5"/><circle cx="12.5" cy="12.5" r="3.2" fill="#f5c75f"/><circle cx="12.5" cy="12.5" r="4.8" fill="none" stroke="#f5c75f" stroke-width="0.8" stroke-dasharray="1,1"/></svg><svg class="a" style="left:1585px;top:358.5px;" width="16" height="16" viewBox="0 0 16 16"><rect x="0" y="6.5" width="11" height="9" fill="#f5c75f"/><path d="M7,6.5 L7,3.5 Q7,0.8 10.3,0.8 Q13.6,0.8 13.6,3.5 L13.6,5" fill="none" stroke="#f5c75f" stroke-width="1.7"/><rect x="4.8" y="9.5" width="1.4" height="3.5" fill="#3b4453"/></svg><svg class="a" style="left:1613.5px;top:358.5px;" width="17" height="16" viewBox="0 0 17 16"><rect x="4" y="0" width="9" height="4.5" fill="#f0f0f0"/><rect x="0" y="4" width="17" height="8" rx="1" fill="#d0d0d0"/><rect x="4" y="9" width="9" height="7" fill="#f0f0f0"/><rect x="5" y="10" width="7" height="4" fill="#5ab4ec"/></svg><div class="a" style="left:1647px;top:359.0px;width:15px;height:15px;background:#000000;border:1px solid #e6e6e6;"></div><div class="t" style="left:1666.50px;top:366.50px;font-size:15px;color:#ececec;transform:scaleX(0.9786);transform-origin:0 0;">wh...</div><div class="a" style="left:1707px;top:359.0px;width:15px;height:15px;background:#000000;border:1px solid #e6e6e6;"></div><div class="t" style="left:1726.50px;top:366.50px;font-size:15px;color:#ececec;transform:scaleX(0.9786);transform-origin:0 0;">wh...</div><div class="t" style="left:1768.20px;top:366.50px;font-size:15px;color:#ececec;transform:scaleX(1.0292);transform-origin:0 0;">Continuous</div><div class="t" style="left:1858.30px;top:366.50px;font-size:15px;color:#ececec;">Continu.</div><svg class="a" style="left:1363.5px;top:384.7px;" width="17" height="8" viewBox="0 0 17 8"><polygon points="0,7 5,0 17,0 12,7" fill="#6cbcf2"/></svg><div class="t" style="left:1388.40px;top:389.50px;font-size:15px;color:#ececec;transform:scaleX(0.9855);transform-origin:0 0;">Circulo</div><svg class="a" style="left:1482px;top:381.5px;" width="13" height="16" viewBox="0 0 13 16"><circle cx="6.5" cy="6.5" r="6.2" fill="#f5c75f"/><rect x="3.8" y="12" width="5.4" height="4" rx="1.5" fill="#eeeeee"/></svg><svg class="a" style="left:1503px;top:381.5px;" width="17" height="17" viewBox="0 0 17 17"><circle cx="8.5" cy="8.5" r="4.8" fill="#f5c75f"/><path d="M8.5,0.5 L8.5,2.5 M8.5,14.5 L8.5,16.5 M0.5,8.5 L2.5,8.5 M14.5,8.5 L16.5,8.5 M3,3 L4.5,4.5 M12.5,12.5 L14,14 M3,14 L4.5,12.5 M12.5,4.5 L14,3" stroke="#f5c75f" stroke-width="1.1"/></svg><svg class="a" style="left:1546px;top:381.0px;" width="17" height="17" viewBox="0 0 17 17"><rect x="1" y="1" width="12" height="12" fill="#5a606b" stroke="#c8c8c8" stroke-width="1" stroke-dasharray="3.5,1.5"/><circle cx="12.5" cy="12.5" r="3.2" fill="#f5c75f"/><circle cx="12.5" cy="12.5" r="4.8" fill="none" stroke="#f5c75f" stroke-width="0.8" stroke-dasharray="1,1"/></svg><svg class="a" style="left:1585px;top:381.5px;" width="16" height="16" viewBox="0 0 16 16"><rect x="0" y="6.5" width="11" height="9" fill="#f5c75f"/><path d="M7,6.5 L7,3.5 Q7,0.8 10.3,0.8 Q13.6,0.8 13.6,3.5 L13.6,5" fill="none" stroke="#f5c75f" stroke-width="1.7"/><rect x="4.8" y="9.5" width="1.4" height="3.5" fill="#3b4453"/></svg><svg class="a" style="left:1613.5px;top:381.5px;" width="17" height="16" viewBox="0 0 17 16"><rect x="4" y="0" width="9" height="4.5" fill="#f0f0f0"/><rect x="0" y="4" width="17" height="8" rx="1" fill="#d0d0d0"/><rect x="4" y="9" width="9" height="7" fill="#f0f0f0"/><rect x="5" y="10" width="7" height="4" fill="#5ab4ec"/></svg><div class="a" style="left:1647px;top:382.0px;width:15px;height:15px;background:#ff0000;border:1px solid #e6e6e6;"></div><div class="t" style="left:1666.50px;top:389.50px;font-size:15px;color:#ececec;transform:scaleX(0.9825);transform-origin:0 0;">red</div><div class="a" style="left:1707px;top:382.0px;width:15px;height:15px;background:#ff0000;border:1px solid #e6e6e6;"></div><div class="t" style="left:1726.50px;top:389.50px;font-size:15px;color:#ececec;transform:scaleX(0.9825);transform-origin:0 0;">red</div><div class="t" style="left:1768.20px;top:389.50px;font-size:15px;color:#ececec;transform:scaleX(1.0292);transform-origin:0 0;">Continuous</div><div class="t" style="left:1858.30px;top:389.50px;font-size:15px;color:#ececec;">Continu.</div><svg class="a" style="left:1363.5px;top:407.7px;" width="17" height="8" viewBox="0 0 17 8"><polygon points="0,7 5,0 17,0 12,7" fill="#6cbcf2"/></svg><div class="t" style="left:1388.40px;top:412.50px;font-size:15px;color:#ececec;transform:scaleX(0.9522);transform-origin:0 0;">Cónicas</div><svg class="a" style="left:1482px;top:404.5px;" width="13" height="16" viewBox="0 0 13 16"><circle cx="6.5" cy="6.5" r="6.2" fill="#f5c75f"/><rect x="3.8" y="12" width="5.4" height="4" rx="1.5" fill="#eeeeee"/></svg><svg class="a" style="left:1503px;top:404.5px;" width="17" height="17" viewBox="0 0 17 17"><circle cx="8.5" cy="8.5" r="4.8" fill="#f5c75f"/><path d="M8.5,0.5 L8.5,2.5 M8.5,14.5 L8.5,16.5 M0.5,8.5 L2.5,8.5 M14.5,8.5 L16.5,8.5 M3,3 L4.5,4.5 M12.5,12.5 L14,14 M3,14 L4.5,12.5 M12.5,4.5 L14,3" stroke="#f5c75f" stroke-width="1.1"/></svg><svg class="a" style="left:1546px;top:404.0px;" width="17" height="17" viewBox="0 0 17 17"><rect x="1" y="1" width="12" height="12" fill="#5a606b" stroke="#c8c8c8" stroke-width="1" stroke-dasharray="3.5,1.5"/><circle cx="12.5" cy="12.5" r="3.2" fill="#f5c75f"/><circle cx="12.5" cy="12.5" r="4.8" fill="none" stroke="#f5c75f" stroke-width="0.8" stroke-dasharray="1,1"/></svg><svg class="a" style="left:1585px;top:404.5px;" width="16" height="16" viewBox="0 0 16 16"><rect x="0" y="6.5" width="11" height="9" fill="#f5c75f"/><path d="M7,6.5 L7,3.5 Q7,0.8 10.3,0.8 Q13.6,0.8 13.6,3.5 L13.6,5" fill="none" stroke="#f5c75f" stroke-width="1.7"/><rect x="4.8" y="9.5" width="1.4" height="3.5" fill="#3b4453"/></svg><svg class="a" style="left:1613.5px;top:404.5px;" width="17" height="16" viewBox="0 0 17 16"><rect x="4" y="0" width="9" height="4.5" fill="#f0f0f0"/><rect x="0" y="4" width="17" height="8" rx="1" fill="#d0d0d0"/><rect x="4" y="9" width="9" height="7" fill="#f0f0f0"/><rect x="5" y="10" width="7" height="4" fill="#5ab4ec"/></svg><div class="a" style="left:1647px;top:405.0px;width:15px;height:15px;background:#000000;border:1px solid #e6e6e6;"></div><div class="t" style="left:1666.50px;top:412.50px;font-size:15px;color:#ececec;transform:scaleX(0.9786);transform-origin:0 0;">wh...</div><div class="a" style="left:1707px;top:405.0px;width:15px;height:15px;background:#000000;border:1px solid #e6e6e6;"></div><div class="t" style="left:1726.50px;top:412.50px;font-size:15px;color:#ececec;transform:scaleX(0.9786);transform-origin:0 0;">wh...</div><div class="t" style="left:1768.20px;top:412.50px;font-size:15px;color:#ececec;transform:scaleX(1.0292);transform-origin:0 0;">Continuous</div><div class="t" style="left:1858.30px;top:412.50px;font-size:15px;color:#ececec;">Continu.</div><div class="a" style="left:1361px;top:424.0px;width:114px;height:23px;background:#6a7d9b;"></div><div class="a" style="left:1478px;top:424.0px;width:436px;height:23px;background:#6a7d9b;"></div><svg class="a" style="left:1363.5px;top:430.7px;" width="17" height="8" viewBox="0 0 17 8"><polygon points="0,7 5,0 17,0 12,7" fill="#6cbcf2"/></svg><div class="t" style="left:1388.40px;top:435.50px;font-size:15px;color:#ececec;transform:scaleX(0.9326);transform-origin:0 0;">Elipse</div><svg class="a" style="left:1482px;top:427.5px;" width="13" height="16" viewBox="0 0 13 16"><circle cx="6.5" cy="6.5" r="6.2" fill="#f5c75f"/><rect x="3.8" y="12" width="5.4" height="4" rx="1.5" fill="#eeeeee"/></svg><svg class="a" style="left:1503px;top:427.5px;" width="17" height="17" viewBox="0 0 17 17"><circle cx="8.5" cy="8.5" r="4.8" fill="#f5c75f"/><path d="M8.5,0.5 L8.5,2.5 M8.5,14.5 L8.5,16.5 M0.5,8.5 L2.5,8.5 M14.5,8.5 L16.5,8.5 M3,3 L4.5,4.5 M12.5,12.5 L14,14 M3,14 L4.5,12.5 M12.5,4.5 L14,3" stroke="#f5c75f" stroke-width="1.1"/></svg><svg class="a" style="left:1546px;top:427.0px;" width="17" height="17" viewBox="0 0 17 17"><rect x="1" y="1" width="12" height="12" fill="#5a606b" stroke="#c8c8c8" stroke-width="1" stroke-dasharray="3.5,1.5"/><circle cx="12.5" cy="12.5" r="3.2" fill="#f5c75f"/><circle cx="12.5" cy="12.5" r="4.8" fill="none" stroke="#f5c75f" stroke-width="0.8" stroke-dasharray="1,1"/></svg><svg class="a" style="left:1585px;top:427.5px;" width="16" height="16" viewBox="0 0 16 16"><rect x="0" y="6.5" width="11" height="9" fill="#f5c75f"/><path d="M7,6.5 L7,3.5 Q7,0.8 10.3,0.8 Q13.6,0.8 13.6,3.5 L13.6,5" fill="none" stroke="#f5c75f" stroke-width="1.7"/><rect x="4.8" y="9.5" width="1.4" height="3.5" fill="#3b4453"/></svg><svg class="a" style="left:1613.5px;top:427.5px;" width="17" height="16" viewBox="0 0 17 16"><rect x="4" y="0" width="9" height="4.5" fill="#f0f0f0"/><rect x="0" y="4" width="17" height="8" rx="1" fill="#d0d0d0"/><rect x="4" y="9" width="9" height="7" fill="#f0f0f0"/><rect x="5" y="10" width="7" height="4" fill="#5ab4ec"/></svg><div class="a" style="left:1647px;top:428.0px;width:15px;height:15px;background:#00ff00;border:1px solid #e6e6e6;"></div><div class="t" style="left:1666.50px;top:435.50px;font-size:15px;color:#ececec;transform:scaleX(0.9830);transform-origin:0 0;">gre...</div><div class="a" style="left:1707px;top:428.0px;width:15px;height:15px;background:#00ff00;border:1px solid #e6e6e6;"></div><div class="t" style="left:1726.50px;top:435.50px;font-size:15px;color:#ececec;transform:scaleX(0.9830);transform-origin:0 0;">gre...</div><div class="t" style="left:1768.20px;top:435.50px;font-size:15px;color:#ececec;transform:scaleX(1.0292);transform-origin:0 0;">Continuous</div><div class="t" style="left:1858.30px;top:435.50px;font-size:15px;color:#ececec;">Continu.</div><svg class="a" style="left:1363.5px;top:453.7px;" width="17" height="8" viewBox="0 0 17 8"><polygon points="0,7 5,0 17,0 12,7" fill="#6cbcf2"/></svg><div class="t" style="left:1388.40px;top:458.50px;font-size:15px;color:#ececec;transform:scaleX(1.0165);transform-origin:0 0;">Iperbole</div><svg class="a" style="left:1482px;top:450.5px;" width="13" height="16" viewBox="0 0 13 16"><circle cx="6.5" cy="6.5" r="6.2" fill="#f5c75f"/><rect x="3.8" y="12" width="5.4" height="4" rx="1.5" fill="#eeeeee"/></svg><svg class="a" style="left:1503px;top:450.5px;" width="17" height="17" viewBox="0 0 17 17"><circle cx="8.5" cy="8.5" r="4.8" fill="#f5c75f"/><path d="M8.5,0.5 L8.5,2.5 M8.5,14.5 L8.5,16.5 M0.5,8.5 L2.5,8.5 M14.5,8.5 L16.5,8.5 M3,3 L4.5,4.5 M12.5,12.5 L14,14 M3,14 L4.5,12.5 M12.5,4.5 L14,3" stroke="#f5c75f" stroke-width="1.1"/></svg><svg class="a" style="left:1546px;top:450.0px;" width="17" height="17" viewBox="0 0 17 17"><rect x="1" y="1" width="12" height="12" fill="#5a606b" stroke="#c8c8c8" stroke-width="1" stroke-dasharray="3.5,1.5"/><circle cx="12.5" cy="12.5" r="3.2" fill="#f5c75f"/><circle cx="12.5" cy="12.5" r="4.8" fill="none" stroke="#f5c75f" stroke-width="0.8" stroke-dasharray="1,1"/></svg><svg class="a" style="left:1585px;top:450.5px;" width="16" height="16" viewBox="0 0 16 16"><rect x="0" y="6.5" width="11" height="9" fill="#f5c75f"/><path d="M7,6.5 L7,3.5 Q7,0.8 10.3,0.8 Q13.6,0.8 13.6,3.5 L13.6,5" fill="none" stroke="#f5c75f" stroke-width="1.7"/><rect x="4.8" y="9.5" width="1.4" height="3.5" fill="#3b4453"/></svg><svg class="a" style="left:1613.5px;top:450.5px;" width="17" height="16" viewBox="0 0 17 16"><rect x="4" y="0" width="9" height="4.5" fill="#f0f0f0"/><rect x="0" y="4" width="17" height="8" rx="1" fill="#d0d0d0"/><rect x="4" y="9" width="9" height="7" fill="#f0f0f0"/><rect x="5" y="10" width="7" height="4" fill="#5ab4ec"/></svg><div class="a" style="left:1647px;top:451.0px;width:15px;height:15px;background:#00ffff;border:1px solid #e6e6e6;"></div><div class="t" style="left:1666.50px;top:458.50px;font-size:15px;color:#ececec;">cyan</div><div class="a" style="left:1707px;top:451.0px;width:15px;height:15px;background:#00ffff;border:1px solid #e6e6e6;"></div><div class="t" style="left:1726.50px;top:458.50px;font-size:15px;color:#ececec;">cyan</div><div class="t" style="left:1768.20px;top:458.50px;font-size:15px;color:#ececec;transform:scaleX(1.0292);transform-origin:0 0;">Continuous</div><div class="t" style="left:1858.30px;top:458.50px;font-size:15px;color:#ececec;">Continu.</div><svg class="a" style="left:1364px;top:474.5px;" width="16" height="13" viewBox="0 0 16 13"><path d="M1.5,6.5 L6,11 L14.5,2" fill="none" stroke="#4fd070" stroke-width="2.6"/></svg><div class="t" style="left:1388.40px;top:481.50px;font-size:15px;color:#ececec;transform:scaleX(0.9207);transform-origin:0 0;">Janelas</div><svg class="a" style="left:1482px;top:473.5px;" width="13" height="16" viewBox="0 0 13 16"><circle cx="6.5" cy="6.5" r="6.2" fill="#f5c75f"/><rect x="3.8" y="12" width="5.4" height="4" rx="1.5" fill="#eeeeee"/></svg><svg class="a" style="left:1503px;top:473.5px;" width="17" height="17" viewBox="0 0 17 17"><circle cx="8.5" cy="8.5" r="4.8" fill="#f5c75f"/><path d="M8.5,0.5 L8.5,2.5 M8.5,14.5 L8.5,16.5 M0.5,8.5 L2.5,8.5 M14.5,8.5 L16.5,8.5 M3,3 L4.5,4.5 M12.5,12.5 L14,14 M3,14 L4.5,12.5 M12.5,4.5 L14,3" stroke="#f5c75f" stroke-width="1.1"/></svg><svg class="a" style="left:1546px;top:473.0px;" width="17" height="17" viewBox="0 0 17 17"><rect x="1" y="1" width="12" height="12" fill="#5a606b" stroke="#c8c8c8" stroke-width="1" stroke-dasharray="3.5,1.5"/><circle cx="12.5" cy="12.5" r="3.2" fill="#f5c75f"/><circle cx="12.5" cy="12.5" r="4.8" fill="none" stroke="#f5c75f" stroke-width="0.8" stroke-dasharray="1,1"/></svg><svg class="a" style="left:1585px;top:473.5px;" width="16" height="16" viewBox="0 0 16 16"><rect x="0" y="6.5" width="11" height="9" fill="#f5c75f"/><path d="M7,6.5 L7,3.5 Q7,0.8 10.3,0.8 Q13.6,0.8 13.6,3.5 L13.6,5" fill="none" stroke="#f5c75f" stroke-width="1.7"/><rect x="4.8" y="9.5" width="1.4" height="3.5" fill="#3b4453"/></svg><svg class="a" style="left:1613.5px;top:473.5px;" width="17" height="16" viewBox="0 0 17 16"><rect x="4" y="0" width="9" height="4.5" fill="#f0f0f0"/><rect x="0" y="4" width="17" height="8" rx="1" fill="#d0d0d0"/><rect x="4" y="9" width="9" height="7" fill="#f0f0f0"/><rect x="5" y="10" width="7" height="4" fill="#5ab4ec"/></svg><div class="a" style="left:1647px;top:474.0px;width:15px;height:15px;background:#ff0000;border:1px solid #e6e6e6;"></div><div class="t" style="left:1666.50px;top:481.50px;font-size:15px;color:#ececec;transform:scaleX(0.9825);transform-origin:0 0;">red</div><div class="a" style="left:1707px;top:474.0px;width:15px;height:15px;background:#ff0000;border:1px solid #e6e6e6;"></div><div class="t" style="left:1726.50px;top:481.50px;font-size:15px;color:#ececec;transform:scaleX(0.9825);transform-origin:0 0;">red</div><div class="t" style="left:1768.20px;top:481.50px;font-size:15px;color:#ececec;transform:scaleX(1.0292);transform-origin:0 0;">Continuous</div><div class="t" style="left:1858.30px;top:481.50px;font-size:15px;color:#ececec;">Continu.</div><svg class="a" style="left:1363.5px;top:499.7px;" width="17" height="8" viewBox="0 0 17 8"><polygon points="0,7 5,0 17,0 12,7" fill="#6cbcf2"/></svg><div class="t" style="left:1388.40px;top:504.50px;font-size:15px;color:#ececec;transform:scaleX(1.0107);transform-origin:0 0;">linhas auxil</div><svg class="a" style="left:1482px;top:496.5px;" width="13" height="16" viewBox="0 0 13 16"><circle cx="6.5" cy="6.5" r="6.2" fill="#5cc8d8"/><rect x="3.8" y="12" width="5.4" height="4" rx="1.5" fill="#eeeeee"/></svg><svg class="a" style="left:1503px;top:496.5px;" width="17" height="17" viewBox="0 0 17 17"><circle cx="8.5" cy="8.5" r="4.8" fill="#f5c75f"/><path d="M8.5,0.5 L8.5,2.5 M8.5,14.5 L8.5,16.5 M0.5,8.5 L2.5,8.5 M14.5,8.5 L16.5,8.5 M3,3 L4.5,4.5 M12.5,12.5 L14,14 M3,14 L4.5,12.5 M12.5,4.5 L14,3" stroke="#f5c75f" stroke-width="1.1"/></svg><svg class="a" style="left:1546px;top:496.0px;" width="17" height="17" viewBox="0 0 17 17"><rect x="1" y="1" width="12" height="12" fill="#5a606b" stroke="#c8c8c8" stroke-width="1" stroke-dasharray="3.5,1.5"/><circle cx="12.5" cy="12.5" r="3.2" fill="#f5c75f"/><circle cx="12.5" cy="12.5" r="4.8" fill="none" stroke="#f5c75f" stroke-width="0.8" stroke-dasharray="1,1"/></svg><svg class="a" style="left:1585px;top:496.5px;" width="16" height="16" viewBox="0 0 16 16"><rect x="0" y="6.5" width="11" height="9" fill="#f5c75f"/><path d="M7,6.5 L7,3.5 Q7,0.8 10.3,0.8 Q13.6,0.8 13.6,3.5 L13.6,5" fill="none" stroke="#f5c75f" stroke-width="1.7"/><rect x="4.8" y="9.5" width="1.4" height="3.5" fill="#3b4453"/></svg><svg class="a" style="left:1613.5px;top:496.5px;" width="17" height="16" viewBox="0 0 17 16"><rect x="4" y="0" width="9" height="4.5" fill="#f0f0f0"/><rect x="0" y="4" width="17" height="8" rx="1" fill="#d0d0d0"/><rect x="4" y="9" width="9" height="7" fill="#f0f0f0"/><rect x="5" y="10" width="7" height="4" fill="#5ab4ec"/></svg><svg class="a" style="left:1621px;top:503.5px;" width="11" height="11" viewBox="0 0 11 11"><circle cx="5.5" cy="5.5" r="5" fill="#e84040"/><rect x="2.5" y="4.8" width="6" height="1.5" fill="#fff"/></svg><div class="a" style="left:1647px;top:497.0px;width:15px;height:15px;background:#f78ca0;border:1px solid #e6e6e6;"></div><div class="t" style="left:1666.50px;top:504.50px;font-size:15px;color:#ececec;transform:scaleX(0.9430);transform-origin:0 0;">241</div><div class="a" style="left:1707px;top:497.0px;width:15px;height:15px;background:#f78ca0;border:1px solid #e6e6e6;"></div><div class="t" style="left:1726.50px;top:504.50px;font-size:15px;color:#ececec;transform:scaleX(0.9430);transform-origin:0 0;">241</div><div class="t" style="left:1768.20px;top:504.50px;font-size:15px;color:#ececec;transform:scaleX(1.0292);transform-origin:0 0;">Continuous</div><div class="t" style="left:1858.30px;top:504.50px;font-size:15px;color:#ececec;">Continu.</div><svg class="a" style="left:1363.5px;top:522.7px;" width="17" height="8" viewBox="0 0 17 8"><polygon points="0,7 5,0 17,0 12,7" fill="#6cbcf2"/></svg><div class="t" style="left:1388.40px;top:527.50px;font-size:15px;color:#ececec;transform:scaleX(0.9593);transform-origin:0 0;">Parabola</div><svg class="a" style="left:1482px;top:519.5px;" width="13" height="16" viewBox="0 0 13 16"><circle cx="6.5" cy="6.5" r="6.2" fill="#f5c75f"/><rect x="3.8" y="12" width="5.4" height="4" rx="1.5" fill="#eeeeee"/></svg><svg class="a" style="left:1503px;top:519.5px;" width="17" height="17" viewBox="0 0 17 17"><circle cx="8.5" cy="8.5" r="4.8" fill="#f5c75f"/><path d="M8.5,0.5 L8.5,2.5 M8.5,14.5 L8.5,16.5 M0.5,8.5 L2.5,8.5 M14.5,8.5 L16.5,8.5 M3,3 L4.5,4.5 M12.5,12.5 L14,14 M3,14 L4.5,12.5 M12.5,4.5 L14,3" stroke="#f5c75f" stroke-width="1.1"/></svg><svg class="a" style="left:1546px;top:519.0px;" width="17" height="17" viewBox="0 0 17 17"><rect x="1" y="1" width="12" height="12" fill="#5a606b" stroke="#c8c8c8" stroke-width="1" stroke-dasharray="3.5,1.5"/><circle cx="12.5" cy="12.5" r="3.2" fill="#f5c75f"/><circle cx="12.5" cy="12.5" r="4.8" fill="none" stroke="#f5c75f" stroke-width="0.8" stroke-dasharray="1,1"/></svg><svg class="a" style="left:1585px;top:519.5px;" width="16" height="16" viewBox="0 0 16 16"><rect x="0" y="6.5" width="11" height="9" fill="#f5c75f"/><path d="M7,6.5 L7,3.5 Q7,0.8 10.3,0.8 Q13.6,0.8 13.6,3.5 L13.6,5" fill="none" stroke="#f5c75f" stroke-width="1.7"/><rect x="4.8" y="9.5" width="1.4" height="3.5" fill="#3b4453"/></svg><svg class="a" style="left:1613.5px;top:519.5px;" width="17" height="16" viewBox="0 0 17 16"><rect x="4" y="0" width="9" height="4.5" fill="#f0f0f0"/><rect x="0" y="4" width="17" height="8" rx="1" fill="#d0d0d0"/><rect x="4" y="9" width="9" height="7" fill="#f0f0f0"/><rect x="5" y="10" width="7" height="4" fill="#5ab4ec"/></svg><div class="a" style="left:1647px;top:520.0px;width:15px;height:15px;background:#ffff00;border:1px solid #e6e6e6;"></div><div class="t" style="left:1666.50px;top:527.50px;font-size:15px;color:#ececec;transform:scaleX(0.9660);transform-origin:0 0;">yel...</div><div class="a" style="left:1707px;top:520.0px;width:15px;height:15px;background:#ffff00;border:1px solid #e6e6e6;"></div><div class="t" style="left:1726.50px;top:527.50px;font-size:15px;color:#ececec;transform:scaleX(0.9660);transform-origin:0 0;">yel...</div><div class="t" style="left:1768.20px;top:527.50px;font-size:15px;color:#ececec;transform:scaleX(1.0292);transform-origin:0 0;">Continuous</div><div class="t" style="left:1858.30px;top:527.50px;font-size:15px;color:#ececec;">Continu.</div><div class="a" style="left:1361px;top:929px;width:553px;height:21px;background:#efefef;"></div><div class="a" style="left:1382px;top:938px;width:214px;height:3px;background:#777777;border-radius:1.5px;"></div><svg class="a" style="left:1326px;top:971px;" width="20" height="20" viewBox="0 0 20 20"><polygon points="0,2 6,2 8,4 15,4 15,16 0,16" fill="#d8d8d8"/><polygon points="13,9 18,9 15.5,13 18.5,13 12.5,20 14,15 11.5,15" fill="#f5c75f"/></svg><svg class="a" style="left:1348px;top:978px;" width="9" height="5" viewBox="0 0 9 5"><polygon points="0,0 9,0 4.5,5" fill="#d8d8d8"/></svg><div class="t" style="left:1366.00px;top:981.50px;font-size:15px;color:#ececec;">All: 8 layers displayed of 8 total layers</div><div class="a" style="left:1301px;top:1008px;width:52px;height:29.5px;background:#3b4453;"></div><div class="a" style="left:1356px;top:1008px;width:130px;height:29.5px;background:#3b4453;"></div><div class="a" style="left:1546px;top:1008px;width:21px;height:29.5px;background:#3b4453;"></div><div class="a" style="left:1570px;top:1008px;width:90px;height:29.5px;background:#3b4453;"></div><div class="a" style="left:1663px;top:1008px;width:50px;height:29.5px;background:#3b4453;"></div><div class="a" style="left:1714px;top:1008px;width:30px;height:29.5px;background:#3b4453;"></div><div class="a" style="left:1747px;top:1008px;width:30px;height:29.5px;background:#3b4453;"></div><div class="a" style="left:1780px;top:1008px;width:68px;height:29.5px;background:#3b4453;"></div><div class="a" style="left:1851px;top:1008px;width:30px;height:29.5px;background:#3b4453;"></div><div class="a" style="left:1883px;top:1008px;width:30px;height:29.5px;background:#3b4453;"></div><div class="a" style="left:1487.5px;top:1008px;width:28.5px;height:29.5px;background:#5b8ac2;"></div><div class="a" style="left:1518px;top:1008px;width:28px;height:29.5px;background:#5b8ac2;"></div><div class="t" style="left:1305.80px;top:1023.30px;font-size:15px;color:#f2f2f2;transform:scaleX(0.8726);transform-origin:0 0;">PAPER</div><svg class="a" style="left:1361px;top:1013px;" width="21" height="20" viewBox="0 0 21 20"><path d="M1,0 L1,19 L20,19" fill="none" stroke="#d8d8d8" stroke-width="1.2"/><rect x="1" y="13" width="6" height="6" fill="none" stroke="#d8d8d8" stroke-width="1"/></svg><svg class="a" style="left:1390px;top:1013px;" width="22" height="19" viewBox="0 0 22 19"><circle cx="9" cy="10" r="8" fill="none" stroke="#d8d8d8" stroke-width="1.2"/><path d="M8,10 L21,10 M9,10 L18,2" stroke="#d8d8d8" stroke-width="1.2"/></svg><svg class="a" style="left:1421.5px;top:1019.5px;" width="9" height="5" viewBox="0 0 9 5"><polygon points="0,0 9,0 4.5,5" fill="#e0e0e0"/></svg><svg class="a" style="left:1442px;top:1013px;" width="17" height="18" viewBox="0 0 17 18"><line x1="8.5" y1="0" x2="8.5" y2="18" stroke="#4ac05a" stroke-width="1.2"/><line x1="1" y1="1" x2="16" y2="17" stroke="#e04848" stroke-width="1.2"/><rect x="6.5" y="7" width="4" height="4" fill="#3b4453" stroke="#d8d8d8" stroke-width="1"/></svg><svg class="a" style="left:1471.5px;top:1019.5px;" width="9" height="5" viewBox="0 0 9 5"><polygon points="0,0 9,0 4.5,5" fill="#e0e0e0"/></svg><svg class="a" style="left:1491px;top:1015px;" width="21" height="17" viewBox="0 0 21 17"><path d="M0,16 L20,16 M1,15 L16,2" stroke="#eef3fa" stroke-width="1.3"/><rect x="6" y="9" width="4" height="4" fill="#eef3fa"/></svg><svg class="a" style="left:1521px;top:1012px;" width="22" height="22" viewBox="0 0 22 22"><rect x="4" y="4" width="17" height="17" fill="none" stroke="#eef3fa" stroke-width="1.4"/><rect x="0.7" y="0.7" width="6" height="6" fill="#5b8ac2" stroke="#eef3fa" stroke-width="1.2"/></svg><svg class="a" style="left:1552.5px;top:1019.5px;" width="9" height="5" viewBox="0 0 9 5"><polygon points="0,0 9,0 4.5,5" fill="#e0e0e0"/></svg><svg class="a" style="left:1575px;top:1013px;" width="21" height="20" viewBox="0 0 21 20"><rect x="1" y="1" width="19" height="18" fill="none" stroke="#d8d8d8" stroke-width="1.2" stroke-dasharray="3,2"/><rect x="8" y="8" width="8" height="7" fill="none" stroke="#d8d8d8" stroke-width="1.2"/><path d="M2,2 L8,8 M2,2 L2,6 M2,2 L6,2" stroke="#d8d8d8" stroke-width="1.2" fill="none"/></svg><svg class="a" style="left:1604px;top:1013px;" width="22" height="20" viewBox="0 0 22 20"><path d="M8,2 L12,15 L17,19 L9,16 L1,19 L5,15 Z" fill="#d8d8d8"/><circle cx="18" cy="5" r="3.5" fill="none" stroke="#d8d8d8" stroke-width="1.1"/></svg><svg class="a" style="left:1634px;top:1013px;" width="22" height="20" viewBox="0 0 22 20"><path d="M8,2 L12,15 L17,19 L9,16 L1,19 L5,15 Z" fill="#d8d8d8"/><polygon points="16,0 20,0 18,4 21,4 15,10 16.5,5.5 14,5.5" fill="#d8d8d8"/></svg><svg class="a" style="left:1667px;top:1012px;" width="21" height="21" viewBox="0 0 21 21"><circle cx="10.5" cy="10.5" r="6" fill="none" stroke="#e0e0e0" stroke-width="4"/><rect x="8.7" y="0" width="3.6" height="5" fill="#e0e0e0" transform="rotate(0 10.5 10.5)"/><rect x="8.7" y="0" width="3.6" height="5" fill="#e0e0e0" transform="rotate(45 10.5 10.5)"/><rect x="8.7" y="0" width="3.6" height="5" fill="#e0e0e0" transform="rotate(90 10.5 10.5)"/><rect x="8.7" y="0" width="3.6" height="5" fill="#e0e0e0" transform="rotate(135 10.5 10.5)"/><rect x="8.7" y="0" width="3.6" height="5" fill="#e0e0e0" transform="rotate(180 10.5 10.5)"/><rect x="8.7" y="0" width="3.6" height="5" fill="#e0e0e0" transform="rotate(225 10.5 10.5)"/><rect x="8.7" y="0" width="3.6" height="5" fill="#e0e0e0" transform="rotate(270 10.5 10.5)"/><rect x="8.7" y="0" width="3.6" height="5" fill="#e0e0e0" transform="rotate(315 10.5 10.5)"/></svg><svg class="a" style="left:1698.5px;top:1019.5px;" width="9" height="5" viewBox="0 0 9 5"><polygon points="0,0 9,0 4.5,5" fill="#e0e0e0"/></svg><div class="a" style="left:1719px;top:1021.5px;width:19px;height:2.6px;background:#e6e6e6;"></div><div class="a" style="left:1727.2px;top:1013px;width:2.6px;height:19px;background:#e6e6e6;"></div><svg class="a" style="left:1752px;top:1012px;" width="21" height="21" viewBox="0 0 21 21"><rect x="1" y="1" width="7" height="7" fill="none" stroke="#d8d8d8" stroke-width="1"/><circle cx="15.5" cy="9" r="4.5" fill="none" stroke="#d8d8d8" stroke-width="1"/><polygon points="5,13 9.5,20 0.5,20" fill="none" stroke="#d8d8d8" stroke-width="1"/></svg><svg class="a" style="left:1784px;top:1010px;" width="25" height="24" viewBox="0 0 25 24"><polygon points="0,0 17,0 20,3 20,20 0,20" fill="#3d7cc9"/><path d="M5,0 L5,20 M0,5 L20,5" stroke="#e8f0f8" stroke-width="1"/><rect x="0" y="14" width="12" height="6" fill="#f5b82e"/><path d="M10,17 L14,21 L23,11" fill="none" stroke="#4ac05a" stroke-width="2.6"/></svg><svg class="a" style="left:1817px;top:1012px;" width="23" height="22" viewBox="0 0 23 22"><path d="M8,6 A9,9 0 1 1 17,18" fill="none" stroke="#e0e0e0" stroke-width="1.3"/><path d="M14,3 L14,9 L18,9" fill="none" stroke="#e0e0e0" stroke-width="1.2"/><rect x="1" y="8" width="10" height="13" fill="#f0f0f0" stroke="#3d7cc9" stroke-width="1"/><rect x="1" y="16" width="10" height="5" fill="#f5b82e"/><circle cx="16" cy="16" r="5" fill="#3aa0f0"/><rect x="15.3" y="14.5" width="1.4" height="4" fill="#fff"/></svg><svg class="a" style="left:1856px;top:1015px;" width="21" height="16" viewBox="0 0 21 16"><rect x="0.6" y="0.6" width="19.8" height="14.8" fill="none" stroke="#dcdcdc" stroke-width="1.2"/><path d="M4,12 L8,8 M4,12 L4,9 M4,12 L7,12 M17,3 L13,7 M17,3 L14,3 M17,3 L17,6" stroke="#dcdcdc" stroke-width="1.2" fill="none"/></svg><div class="a" style="left:1888px;top:1013.3px;width:20px;height:2.4px;background:#e6e6e6;"></div><div class="a" style="left:1888px;top:1020.8px;width:20px;height:2.4px;background:#e6e6e6;"></div><div class="a" style="left:1888px;top:1028.3px;width:20px;height:2.4px;background:#e6e6e6;"></div></body></html>
